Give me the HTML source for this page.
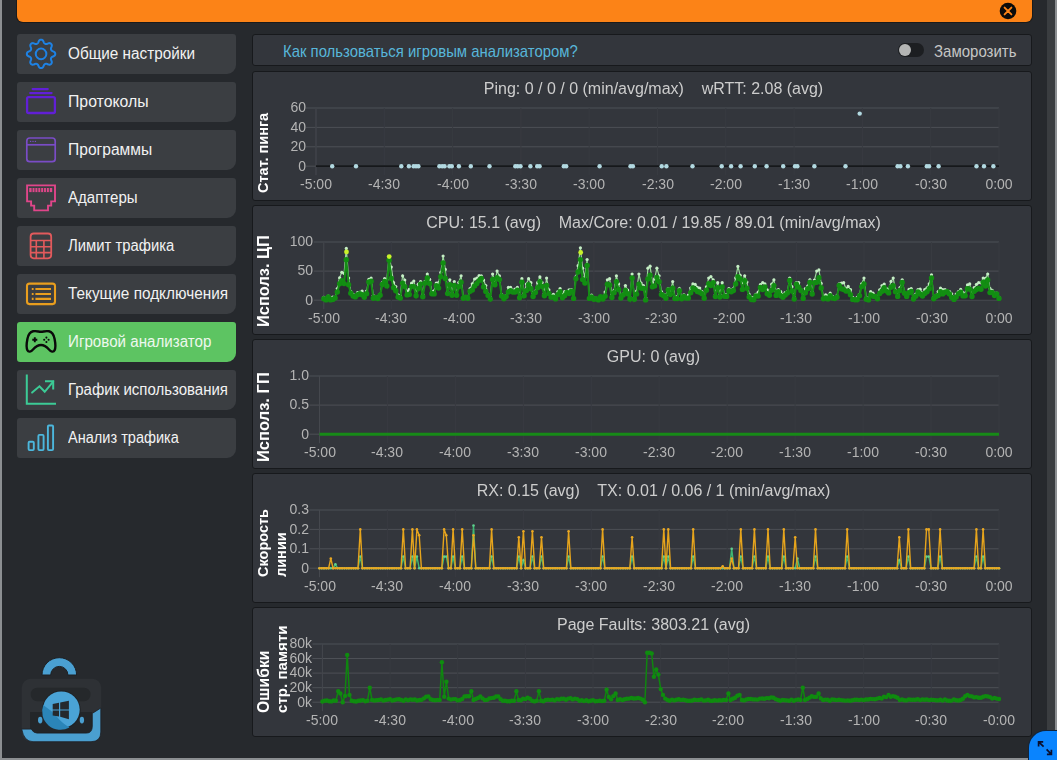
<!DOCTYPE html><html><head><meta charset="utf-8"><style>
*{margin:0;padding:0;box-sizing:border-box}
html,body{width:1057px;height:760px;overflow:hidden;background:#26292d;font-family:"Liberation Sans", sans-serif;}
.abs{position:absolute}
#lb{left:0;top:0;width:2px;height:760px;background:#8c8f92}
#bb{left:0;top:758px;width:1057px;height:2px;background:#8c8f92}
#rb{left:1055px;top:0;width:2px;height:760px;background:#8c8f92}
#sb{left:1047px;top:0;width:8px;height:758px;background:#3a3d40}
#banner{left:17px;top:-6px;width:1015px;height:28px;background:#fc8317;border-radius:6px;box-shadow:0 0 0 1px #1b1b1b}
.mi{position:absolute;left:17px;width:219px;height:40px;background:#3b3e42;border-radius:3px 3px 9px 3px;}
.mi.act{background:#5dc462}
.mt{position:absolute;left:68px;color:#f2f2f2;font-size:15px;white-space:pre;line-height:18px;transform-origin:0 14px}
.panel{position:absolute;left:252px;width:780px;background:#33363c;border:1px solid #17191c;border-radius:3px}
.ttl{position:absolute;font-size:16px;color:#cdcdcd;will-change:transform;white-space:pre;line-height:18px}
.yt{position:absolute;font-weight:bold;color:#ffffff;white-space:pre;transform-origin:0 0;transform:rotate(-90deg);line-height:17px}
.tl{position:absolute;font-size:14px;color:#b4b4b4;will-change:transform;white-space:pre;line-height:16px}
</style></head><body><div class="abs" id="banner"></div><svg class="abs" style="left:999px;top:2px" width="18" height="18" viewBox="0 0 18 18"><circle cx="9" cy="9" r="8.3" fill="#0b0b0b"/><path d="M5.6 5.6L12.4 12.4M12.4 5.6L5.6 12.4" stroke="#fc8317" stroke-width="1.9" stroke-linecap="round"/></svg><div class="mi" style="top:34px"></div><div class="mt" style="top:44.7px;transform:scale(1.0206,1.04)">Общие настройки</div><div class="mi" style="top:82px"></div><div class="mt" style="top:92.7px;transform:scale(1.0544,1.04)">Протоколы</div><div class="mi" style="top:130px"></div><div class="mt" style="top:140.7px;transform:scale(1.0395,1.04)">Программы</div><div class="mi" style="top:178px"></div><div class="mt" style="top:188.7px;transform:scale(1.0030,1.04)">Адаптеры</div><div class="mi" style="top:226px"></div><div class="mt" style="top:236.7px;transform:scale(0.9886,1.04)">Лимит трафика</div><div class="mi" style="top:274px"></div><div class="mt" style="top:284.7px;transform:scale(1.0235,1.04)">Текущие подключения</div><div class="mi act" style="top:322px"></div><div class="mt" style="top:332.7px;color:#eef8ee;transform:scale(1.0100,1.04)">Игровой анализатор</div><div class="mi" style="top:370px"></div><div class="mt" style="top:380.7px;transform:scale(1.0000,1.04)">График использования</div><div class="mi" style="top:418px"></div><div class="mt" style="top:428.7px;transform:scale(0.9698,1.04)">Анализ трафика</div><svg class="abs" style="left:0;top:0" width="240" height="470" viewBox="0 0 240 470" fill="none">
<g stroke="#1e82e4" stroke-width="2"><path d="M55.25 53.90L55.23 54.27L55.15 54.64L55.02 55.00L54.82 55.35L54.52 55.67L54.11 55.97L53.62 56.23L53.09 56.46L52.60 56.67L52.18 56.88L51.84 57.10L51.59 57.33L51.40 57.56L51.24 57.81L51.12 58.07L51.02 58.34L50.96 58.63L50.93 58.93L50.94 59.27L51.03 59.66L51.18 60.10L51.38 60.61L51.59 61.14L51.75 61.67L51.83 62.17L51.81 62.61L51.71 63.00L51.55 63.35L51.34 63.66L51.09 63.94L50.81 64.19L50.50 64.40L50.15 64.56L49.76 64.66L49.32 64.68L48.82 64.60L48.29 64.44L47.76 64.23L47.25 64.03L46.81 63.88L46.42 63.79L46.08 63.78L45.78 63.81L45.49 63.87L45.22 63.97L44.96 64.09L44.71 64.25L44.48 64.44L44.25 64.69L44.03 65.03L43.82 65.45L43.61 65.94L43.38 66.47L43.12 66.96L42.82 67.37L42.50 67.67L42.15 67.87L41.79 68.00L41.42 68.08L41.05 68.10L40.68 68.08L40.31 68.00L39.95 67.87L39.60 67.67L39.28 67.37L38.98 66.96L38.72 66.47L38.49 65.94L38.28 65.45L38.07 65.03L37.85 64.69L37.62 64.44L37.39 64.25L37.14 64.09L36.88 63.97L36.61 63.87L36.32 63.81L36.02 63.78L35.68 63.79L35.29 63.88L34.85 64.03L34.34 64.23L33.81 64.44L33.28 64.60L32.78 64.68L32.34 64.66L31.95 64.56L31.60 64.40L31.29 64.19L31.01 63.94L30.76 63.66L30.55 63.35L30.39 63.00L30.29 62.61L30.27 62.17L30.35 61.67L30.51 61.14L30.72 60.61L30.92 60.10L31.07 59.66L31.16 59.27L31.17 58.93L31.14 58.63L31.08 58.34L30.98 58.07L30.86 57.81L30.70 57.56L30.51 57.33L30.26 57.10L29.92 56.88L29.50 56.67L29.01 56.46L28.48 56.23L27.99 55.97L27.58 55.67L27.28 55.35L27.08 55.00L26.95 54.64L26.87 54.27L26.85 53.90L26.87 53.53L26.95 53.16L27.08 52.80L27.28 52.45L27.58 52.13L27.99 51.83L28.48 51.57L29.01 51.34L29.50 51.13L29.92 50.92L30.26 50.70L30.51 50.47L30.70 50.24L30.86 49.99L30.98 49.73L31.08 49.46L31.14 49.17L31.17 48.87L31.16 48.53L31.07 48.14L30.92 47.70L30.72 47.19L30.51 46.66L30.35 46.13L30.27 45.63L30.29 45.19L30.39 44.80L30.55 44.45L30.76 44.14L31.01 43.86L31.29 43.61L31.60 43.40L31.95 43.24L32.34 43.14L32.78 43.12L33.28 43.20L33.81 43.36L34.34 43.57L34.85 43.77L35.29 43.92L35.68 44.01L36.02 44.02L36.32 43.99L36.61 43.93L36.88 43.83L37.14 43.71L37.39 43.55L37.62 43.36L37.85 43.11L38.07 42.77L38.28 42.35L38.49 41.86L38.72 41.33L38.98 40.84L39.28 40.43L39.60 40.13L39.95 39.93L40.31 39.80L40.68 39.72L41.05 39.70L41.42 39.72L41.79 39.80L42.15 39.93L42.50 40.13L42.82 40.43L43.12 40.84L43.38 41.33L43.61 41.86L43.82 42.35L44.03 42.77L44.25 43.11L44.48 43.36L44.71 43.55L44.96 43.71L45.22 43.83L45.49 43.93L45.78 43.99L46.08 44.02L46.42 44.01L46.81 43.92L47.25 43.77L47.76 43.57L48.29 43.36L48.82 43.20L49.32 43.12L49.76 43.14L50.15 43.24L50.50 43.40L50.81 43.61L51.09 43.86L51.34 44.14L51.55 44.45L51.71 44.80L51.81 45.19L51.83 45.63L51.75 46.13L51.59 46.66L51.38 47.19L51.18 47.70L51.03 48.14L50.94 48.53L50.93 48.87L50.96 49.17L51.02 49.46L51.12 49.73L51.24 49.99L51.40 50.24L51.59 50.47L51.84 50.70L52.18 50.92L52.60 51.13L53.09 51.34L53.62 51.57L54.11 51.83L54.52 52.13L54.82 52.45L55.02 52.80L55.15 53.16L55.23 53.53Z"/><circle cx="41.05" cy="53.9" r="5.3"/></g>
<g stroke="#611fd6"><rect x="27.1" y="97.1" width="27.8" height="15.9" rx="1.5" stroke-width="2.3"/><path d="M32.6 89.1H47.8M30.2 93.1H51.6" stroke-width="2.1" stroke-linecap="round"/></g>
<g stroke="#7a4cc6" stroke-width="1.7"><rect x="26.8" y="138" width="28.4" height="23.7" rx="3"/><path d="M26.8 144.8H55.2"/><circle cx="30.6" cy="141.4" r="0.7" fill="#7a4cc6" stroke="none"/><circle cx="33" cy="141.4" r="0.7" fill="#7a4cc6" stroke="none"/><circle cx="35.4" cy="141.4" r="0.7" fill="#7a4cc6" stroke="none"/></g>
<g stroke="#e0468a" stroke-width="1.9"><path d="M27.1 185.4H55V201.4H51.2V205.6H48V210.4H34.2V205.6H31.1V201.4H27.1Z"/><rect x="29.2" y="188" width="23" height="4.1" fill="#e0468a" stroke="none"/><path d="M32.08 187.8V192.3M34.95 187.8V192.3M37.83 187.8V192.3M40.70 187.8V192.3M43.58 187.8V192.3M46.45 187.8V192.3M49.33 187.8V192.3" stroke="#3b3e42" stroke-width="0.9"/></g>
<g stroke="#e25a5c" stroke-width="1.8"><rect x="30.6" y="233.5" width="20.6" height="24.8" rx="3.2"/><path d="M30.6 240.5H51.2M30.6 246.8H51.2M30.6 252.6H51.2M36.3 240.5V258.3M43.9 240.5V258.3" stroke-width="1.6"/></g>
<g stroke="#e99e1e"><rect x="27" y="283.6" width="28" height="20.5" rx="2.5" stroke-width="2.1"/><path d="M35.4 289H51M35.4 294H51M35.4 298.9H51" stroke-width="2.1"/><path d="M31.8 289H33.6M31.8 294H33.6M31.8 298.9H33.6" stroke-width="2.1"/></g>
<g stroke="#0a0a0a" stroke-width="2.4"><path d="M33 331.3C36.5 330.6 38.5 331.8 41 331.8C43.5 331.8 45.5 330.6 49 331.3C52.5 332 53.8 335 54.6 339C55.4 343 55.6 348 54.6 350.2C53.5 352.5 51 351.8 49 349.5C46.8 347 44.5 345 41 345C37.5 345 35.2 347 33 349.5C31 351.8 28.5 352.5 27.4 350.2C26.4 348 26.6 343 27.4 339C28.2 335 29.5 332 33 331.3Z"/><path d="M34.8 337.3V342.3M32.3 339.8H37.3" stroke-width="1.9"/></g>
<g fill="#0a0a0a"><circle cx="44.2" cy="339.8" r="1.05"/><circle cx="46.4" cy="337.6" r="1.05"/><circle cx="46.4" cy="342" r="1.05"/><circle cx="48.6" cy="339.8" r="1.05"/></g>
<g stroke="#3ccb96" stroke-width="2"><path d="M26.8 374.6V403.7H56"/><path d="M32.1 392.6L39.5 386.3L44.7 391.8L53.2 381.6" stroke-linecap="round"/><path d="M45 381.3H53.2V389.5"/></g>
<g stroke="#4cb7dd" stroke-width="1.9"><rect x="28.6" y="441.7" width="5.2" height="8.4" rx="1"/><rect x="38.4" y="434.9" width="5.2" height="15.2" rx="1"/><rect x="47.9" y="425.5" width="5.2" height="24.6" rx="1"/></g>
</svg><svg class="abs" style="left:0;top:640px" width="120" height="110" viewBox="0 640 120 110">
<path d="M42 675A17.3 17.3 0 0 1 76.6 675H67.9A8.6 8.6 0 0 0 50.7 675Z" fill="#4aa0d2" stroke="#1d2024" stroke-width="1"/>
<rect x="21.7" y="678.8" width="79.6" height="62.9" rx="9" fill="#2e3135"/>
<rect x="30.7" y="687.7" width="59.8" height="13.5" rx="6.5" fill="#25282b"/>
<path d="M30 712H92V734H30Z" fill="#232629"/>
<path d="M21.7 729.1H31.2Q33.5 733.1 37 733.1H86.5Q92.3 733.1 92.3 726V713.4L100.8 708V732Q100.8 741.7 91 741.7H33Q24 741.7 21.7 729.1Z" fill="#4a9fd0" stroke="#1d2024" stroke-width="0.8"/>
<circle cx="61.3" cy="709.8" r="19.3" fill="#1d2024"/>
<circle cx="61.3" cy="709.8" r="18.4" fill="#4aa3d6"/>
<ellipse cx="40.2" cy="720.1" rx="2.2" ry="3.4" fill="#4a9fd0"/>
<ellipse cx="81.9" cy="720.1" rx="2.2" ry="3.4" fill="#4a9fd0"/>
<path d="M43.2 705Q51 710 57 717Q63 724 69.5 727.4A18.4 18.4 0 0 1 43.2 705Z" fill="#2b85b8"/>
<path d="M52.7 703.9L59 702.8V709.5H52.7ZM60.2 702.6L68.9 700.8V709.5H60.2ZM52.7 710.5H59V716.6L52.7 715.6ZM60.2 710.5H68.9V719.2L60.2 716.8Z" fill="#25292d"/>
</svg><div class="panel" style="top:34px;height:32px"></div><div class="abs" style="left:283px;top:42.5px;font-size:14.9px;color:#58b6da;white-space:pre;line-height:18px;transform:scaleY(1.06);transform-origin:0 14px">Как пользоваться игровым анализатором?</div><div class="abs" style="left:898px;top:42.8px;width:25.5px;height:14px;border-radius:7px;background:#1c1e21"></div><div class="abs" style="left:899px;top:43.9px;width:11.8px;height:11.8px;border-radius:50%;background:#b4b5b4"></div><div class="abs" style="left:934px;top:42.5px;font-size:15px;color:#c6c6c6;white-space:pre;line-height:18px;transform:scaleY(1.06);transform-origin:0 14px">Заморозить</div><div class="panel" style="top:71px;height:130px"></div><div class="ttl" style="left:275px;width:757px;text-align:center;top:80px">Ping: 0 / 0 / 0 (min/avg/max)    wRTT: 2.08 (avg)</div><svg class="abs" style="left:0;top:0" width="1057" height="760" viewBox="0 0 1057 760"><line x1="306" y1="108.0" x2="999" y2="108.0" stroke="#4d5056" stroke-width="1"/><line x1="306" y1="127.4" x2="999" y2="127.4" stroke="#4d5056" stroke-width="1"/><line x1="306" y1="146.8" x2="999" y2="146.8" stroke="#4d5056" stroke-width="1"/><line x1="306" y1="166.2" x2="999" y2="166.2" stroke="#4d5056" stroke-width="1"/><line x1="316.0" y1="108" x2="316.0" y2="175.2" stroke="#383b41" stroke-width="1"/><line x1="384.3" y1="108" x2="384.3" y2="175.2" stroke="#383b41" stroke-width="1"/><line x1="452.6" y1="108" x2="452.6" y2="175.2" stroke="#383b41" stroke-width="1"/><line x1="520.9" y1="108" x2="520.9" y2="175.2" stroke="#383b41" stroke-width="1"/><line x1="589.2" y1="108" x2="589.2" y2="175.2" stroke="#383b41" stroke-width="1"/><line x1="657.5" y1="108" x2="657.5" y2="175.2" stroke="#383b41" stroke-width="1"/><line x1="725.8" y1="108" x2="725.8" y2="175.2" stroke="#383b41" stroke-width="1"/><line x1="794.1" y1="108" x2="794.1" y2="175.2" stroke="#383b41" stroke-width="1"/><line x1="862.4" y1="108" x2="862.4" y2="175.2" stroke="#383b41" stroke-width="1"/><line x1="930.7" y1="108" x2="930.7" y2="175.2" stroke="#383b41" stroke-width="1"/><line x1="999.0" y1="108" x2="999.0" y2="175.2" stroke="#383b41" stroke-width="1"/><line x1="316" y1="108" x2="316" y2="175.2" stroke="#45484e" stroke-width="1"/><line x1="316" y1="166.2" x2="999" y2="166.2" stroke="#16181b" stroke-width="1.7"/><circle cx="332.2" cy="166.2" r="2.2" fill="#b2d9e1"/><circle cx="356" cy="166.2" r="2.2" fill="#b2d9e1"/><circle cx="401.3" cy="166.2" r="2.2" fill="#b2d9e1"/><circle cx="408.9" cy="166.2" r="2.2" fill="#b2d9e1"/><circle cx="413.6" cy="166.2" r="2.2" fill="#b2d9e1"/><circle cx="416" cy="166.2" r="2.2" fill="#b2d9e1"/><circle cx="418.4" cy="166.2" r="2.2" fill="#b2d9e1"/><circle cx="439.4" cy="166.2" r="2.2" fill="#b2d9e1"/><circle cx="442.2" cy="166.2" r="2.2" fill="#b2d9e1"/><circle cx="444.6" cy="166.2" r="2.2" fill="#b2d9e1"/><circle cx="449.4" cy="166.2" r="2.2" fill="#b2d9e1"/><circle cx="451.8" cy="166.2" r="2.2" fill="#b2d9e1"/><circle cx="458.9" cy="166.2" r="2.2" fill="#b2d9e1"/><circle cx="470.8" cy="166.2" r="2.2" fill="#b2d9e1"/><circle cx="489.5" cy="166.2" r="2.2" fill="#b2d9e1"/><circle cx="515.3" cy="166.2" r="2.2" fill="#b2d9e1"/><circle cx="517.7" cy="166.2" r="2.2" fill="#b2d9e1"/><circle cx="520.5" cy="166.2" r="2.2" fill="#b2d9e1"/><circle cx="530.4" cy="166.2" r="2.2" fill="#b2d9e1"/><circle cx="537.2" cy="166.2" r="2.2" fill="#b2d9e1"/><circle cx="539.6" cy="166.2" r="2.2" fill="#b2d9e1"/><circle cx="563.8" cy="166.2" r="2.2" fill="#b2d9e1"/><circle cx="566.2" cy="166.2" r="2.2" fill="#b2d9e1"/><circle cx="599.6" cy="166.2" r="2.2" fill="#b2d9e1"/><circle cx="630.5" cy="166.2" r="2.2" fill="#b2d9e1"/><circle cx="632.9" cy="166.2" r="2.2" fill="#b2d9e1"/><circle cx="661.7" cy="166.2" r="2.2" fill="#b2d9e1"/><circle cx="666.4" cy="166.2" r="2.2" fill="#b2d9e1"/><circle cx="692.5" cy="166.2" r="2.2" fill="#b2d9e1"/><circle cx="721.7" cy="166.2" r="2.2" fill="#b2d9e1"/><circle cx="731.1" cy="166.2" r="2.2" fill="#b2d9e1"/><circle cx="740.6" cy="166.2" r="2.2" fill="#b2d9e1"/><circle cx="754.8" cy="166.2" r="2.2" fill="#b2d9e1"/><circle cx="766.6" cy="166.2" r="2.2" fill="#b2d9e1"/><circle cx="783.2" cy="166.2" r="2.2" fill="#b2d9e1"/><circle cx="795" cy="166.2" r="2.2" fill="#b2d9e1"/><circle cx="797.4" cy="166.2" r="2.2" fill="#b2d9e1"/><circle cx="814.4" cy="166.2" r="2.2" fill="#b2d9e1"/><circle cx="845.5" cy="166.2" r="2.2" fill="#b2d9e1"/><circle cx="897.6" cy="166.2" r="2.2" fill="#b2d9e1"/><circle cx="900.4" cy="166.2" r="2.2" fill="#b2d9e1"/><circle cx="907.9" cy="166.2" r="2.2" fill="#b2d9e1"/><circle cx="926.8" cy="166.2" r="2.2" fill="#b2d9e1"/><circle cx="929.1" cy="166.2" r="2.2" fill="#b2d9e1"/><circle cx="938.6" cy="166.2" r="2.2" fill="#b2d9e1"/><circle cx="976.5" cy="166.2" r="2.2" fill="#b2d9e1"/><circle cx="984" cy="166.2" r="2.2" fill="#b2d9e1"/><circle cx="993.4" cy="166.2" r="2.2" fill="#b2d9e1"/><circle cx="859.7" cy="113.6" r="2.2" fill="#b2d9e1"/></svg><div class="tl" style="left:65.5px;width:240px;text-align:right;top:99.3px">60</div><div class="tl" style="left:65.5px;width:240px;text-align:right;top:118.7px">40</div><div class="tl" style="left:65.5px;width:240px;text-align:right;top:138.1px">20</div><div class="tl" style="left:65.5px;width:240px;text-align:right;top:157.5px">0</div><div class="tl" style="left:276.0px;width:80px;text-align:center;top:176.2px">-5:00</div><div class="tl" style="left:344.3px;width:80px;text-align:center;top:176.2px">-4:30</div><div class="tl" style="left:412.6px;width:80px;text-align:center;top:176.2px">-4:00</div><div class="tl" style="left:480.9px;width:80px;text-align:center;top:176.2px">-3:30</div><div class="tl" style="left:549.2px;width:80px;text-align:center;top:176.2px">-3:00</div><div class="tl" style="left:617.5px;width:80px;text-align:center;top:176.2px">-2:30</div><div class="tl" style="left:685.8px;width:80px;text-align:center;top:176.2px">-2:00</div><div class="tl" style="left:754.1px;width:80px;text-align:center;top:176.2px">-1:30</div><div class="tl" style="left:822.4px;width:80px;text-align:center;top:176.2px">-1:00</div><div class="tl" style="left:890.7px;width:80px;text-align:center;top:176.2px">-0:30</div><div class="tl" style="left:959.0px;width:80px;text-align:center;top:176.2px">0:00</div><div class="yt" style="left:255px;top:193px;font-size:14.5px">Стат. пинга</div><div class="panel" style="top:205px;height:130px"></div><div class="ttl" style="left:275px;width:757px;text-align:center;top:214px">CPU: 15.1 (avg)    Max/Core: 0.01 / 19.85 / 89.01 (min/avg/max)</div><svg class="abs" style="left:0;top:0" width="1057" height="760" viewBox="0 0 1057 760"><line x1="313.8" y1="242.0" x2="999" y2="242.0" stroke="#4d5056" stroke-width="1"/><line x1="313.8" y1="271.1" x2="999" y2="271.1" stroke="#4d5056" stroke-width="1"/><line x1="313.8" y1="300.2" x2="999" y2="300.2" stroke="#4d5056" stroke-width="1"/><line x1="323.8" y1="242" x2="323.8" y2="309.2" stroke="#383b41" stroke-width="1"/><line x1="391.3" y1="242" x2="391.3" y2="309.2" stroke="#383b41" stroke-width="1"/><line x1="458.8" y1="242" x2="458.8" y2="309.2" stroke="#383b41" stroke-width="1"/><line x1="526.4" y1="242" x2="526.4" y2="309.2" stroke="#383b41" stroke-width="1"/><line x1="593.9" y1="242" x2="593.9" y2="309.2" stroke="#383b41" stroke-width="1"/><line x1="661.4" y1="242" x2="661.4" y2="309.2" stroke="#383b41" stroke-width="1"/><line x1="728.9" y1="242" x2="728.9" y2="309.2" stroke="#383b41" stroke-width="1"/><line x1="796.4" y1="242" x2="796.4" y2="309.2" stroke="#383b41" stroke-width="1"/><line x1="864.0" y1="242" x2="864.0" y2="309.2" stroke="#383b41" stroke-width="1"/><line x1="931.5" y1="242" x2="931.5" y2="309.2" stroke="#383b41" stroke-width="1"/><line x1="999.0" y1="242" x2="999.0" y2="309.2" stroke="#383b41" stroke-width="1"/><line x1="323.8" y1="242" x2="323.8" y2="309.2" stroke="#45484e" stroke-width="1"/><path d="M323.8 298.8L326.1 299.9L328.3 296.9L330.6 299.9L332.8 299.4L335.1 297.9L337.3 292.0L339.6 283.7L341.8 280.6L344.1 283.6L346.3 259.7L348.6 284.7L350.8 293.3L353.1 296.1L355.3 296.9L357.6 294.7L359.8 293.7L362.1 294.7L364.3 297.3L366.6 293.8L368.8 282.0L371.1 281.3L373.3 298.3L375.6 297.5L377.8 298.5L380.1 295.2L382.3 284.5L384.6 281.4L386.8 285.9L389.1 260.2L391.3 278.4L393.6 287.8L395.8 290.8L398.1 297.1L400.3 298.1L402.6 283.1L404.8 286.6L407.1 294.9L409.3 294.4L411.6 286.6L413.8 286.6L416.1 295.7L418.3 288.6L420.6 284.1L422.8 296.7L425.1 283.0L427.3 277.9L429.6 283.5L431.8 293.7L434.1 293.9L436.3 285.7L438.6 288.1L440.8 276.6L443.1 263.0L445.3 278.4L447.6 293.6L449.8 284.7L452.1 295.3L454.3 285.5L456.6 295.3L458.8 286.8L461.1 282.3L463.3 298.2L465.6 297.3L467.8 298.2L470.1 291.3L472.3 289.9L474.6 285.9L476.8 283.6L479.1 280.6L481.3 278.5L483.6 286.9L485.8 291.4L488.1 295.4L490.3 299.1L492.6 279.5L494.9 284.8L497.1 277.6L499.4 279.6L501.6 296.0L503.9 298.7L506.1 296.6L508.4 292.0L510.6 290.7L512.9 292.0L515.1 292.0L517.4 290.1L519.6 297.8L521.9 282.2L524.1 295.7L526.4 290.6L528.6 284.7L530.9 288.7L533.1 296.5L535.4 292.6L537.6 287.7L539.9 281.6L542.1 286.5L544.4 295.8L546.6 285.4L548.9 293.5L551.1 297.3L553.4 297.1L555.6 298.9L557.9 294.7L560.1 291.8L562.4 297.8L564.6 295.7L566.9 292.5L569.1 293.5L571.4 291.1L573.6 298.4L575.9 278.8L578.1 272.0L580.4 259.6L582.6 279.6L584.9 283.1L587.1 265.5L589.4 298.4L591.6 296.9L593.9 299.3L596.1 298.8L598.4 299.9L600.6 296.7L602.9 299.1L605.1 296.2L607.4 284.2L609.6 285.0L611.9 297.5L614.1 292.7L616.4 281.7L618.6 289.5L620.9 298.1L623.1 294.9L625.4 290.5L627.6 293.7L629.9 299.0L632.1 277.9L634.4 299.2L636.6 294.1L638.9 284.1L641.1 288.0L643.4 288.4L645.6 299.9L647.9 279.0L650.1 275.1L652.4 286.7L654.6 285.9L656.9 277.5L659.1 281.7L661.4 294.5L663.7 295.7L665.9 298.2L668.2 289.9L670.4 294.5L672.7 288.2L674.9 298.6L677.2 298.6L679.4 290.8L681.7 298.7L683.9 296.5L686.2 298.1L688.4 298.1L690.7 292.7L692.9 288.0L695.2 289.4L697.4 291.6L699.7 292.3L701.9 293.8L704.2 298.3L706.4 290.3L708.7 283.7L710.9 285.5L713.2 282.7L715.4 296.6L717.7 287.7L719.9 297.1L722.2 286.9L724.4 296.3L726.7 296.4L728.9 290.8L731.2 291.7L733.4 290.5L735.7 283.9L737.9 276.8L740.2 279.0L742.4 289.4L744.7 280.7L746.9 288.3L749.2 296.9L751.4 299.6L753.7 299.7L755.9 296.0L758.2 296.1L760.4 287.4L762.7 289.6L764.9 287.0L767.2 293.8L769.4 295.2L771.7 290.2L773.9 285.6L776.2 295.4L778.4 291.7L780.7 295.8L782.9 297.3L785.2 295.1L787.4 293.0L789.7 280.4L791.9 291.0L794.2 299.1L796.4 284.1L798.7 287.2L800.9 290.4L803.2 298.4L805.4 292.8L807.7 288.7L809.9 282.5L812.2 294.0L814.4 282.8L816.7 282.2L818.9 277.7L821.2 287.9L823.4 298.8L825.7 297.9L827.9 298.9L830.2 295.8L832.5 298.1L834.7 298.5L837.0 297.2L839.2 285.4L841.5 288.8L843.7 289.4L846.0 291.1L848.2 291.1L850.5 294.8L852.7 299.4L855.0 299.7L857.2 299.7L859.5 295.7L861.7 286.6L864.0 284.0L866.2 299.2L868.5 299.9L870.7 295.0L873.0 296.3L875.2 296.5L877.5 298.8L879.7 293.5L882.0 291.3L884.2 287.6L886.5 291.1L888.7 292.9L891.0 287.3L893.2 285.6L895.5 291.7L897.7 296.4L900.0 290.5L902.2 282.5L904.5 293.3L906.7 296.4L909.0 292.8L911.2 291.5L913.5 299.0L915.7 296.3L918.0 291.9L920.2 294.1L922.5 296.0L924.7 293.4L927.0 291.8L929.2 288.7L931.5 278.0L933.7 298.7L936.0 296.4L938.2 295.4L940.5 291.7L942.7 293.9L945.0 292.3L947.2 291.8L949.5 294.0L951.7 297.4L954.0 299.4L956.2 297.0L958.5 293.8L960.7 292.3L963.0 295.9L965.2 295.7L967.5 288.8L969.7 289.1L972.0 296.5L974.2 291.3L976.5 289.5L978.7 288.4L981.0 289.2L983.2 282.3L985.5 286.0L987.7 280.0L990.0 292.6L992.2 292.4L994.5 295.6L996.7 294.0L999.0 298.4L999 300.2L323.8 300.2Z" fill="#000" fill-opacity="0.18"/><path d="M323.8 297.3L326.1 299.7L328.3 296.2L330.6 299.9L332.8 297.0L335.1 297.3L337.3 288.6L339.6 277.8L341.8 272.3L344.1 273.4L346.3 248.4L348.6 278.1L350.8 291.5L353.1 294.4L355.3 296.5L357.6 292.6L359.8 292.3L362.1 291.1L364.3 295.5L366.6 291.0L368.8 279.4L371.1 278.1L373.3 295.5L375.6 296.6L377.8 297.2L380.1 294.4L382.3 282.7L384.6 278.6L386.8 279.8L389.1 256.6L391.3 267.1L393.6 282.7L395.8 286.6L398.1 295.1L400.3 295.5L402.6 275.8L404.8 280.1L407.1 291.5L409.3 289.4L411.6 283.2L413.8 281.0L416.1 291.5L418.3 284.2L420.6 281.6L422.8 294.4L425.1 281.3L427.3 274.0L429.6 279.4L431.8 291.5L434.1 290.9L436.3 283.0L438.6 282.7L440.8 272.4L443.1 256.0L445.3 269.4L447.6 291.5L449.8 279.8L452.1 293.2L454.3 281.6L456.6 294.4L458.8 282.5L461.1 275.8L463.3 297.3L465.6 296.6L467.8 297.3L470.1 288.6L472.3 283.8L474.6 279.0L476.8 278.1L479.1 275.6L481.3 275.8L483.6 280.1L485.8 285.6L488.1 294.4L490.3 297.3L492.6 274.0L494.9 282.7L497.1 271.1L499.4 275.8L501.6 294.4L503.9 297.3L506.1 295.5L508.4 287.4L510.6 287.4L512.9 290.0L515.1 289.2L517.4 287.4L519.6 294.4L521.9 278.7L524.1 293.2L526.4 284.0L528.6 278.7L530.9 282.7L533.1 293.2L535.4 291.2L537.6 282.7L539.9 276.9L542.1 282.5L544.4 293.2L546.6 278.1L548.9 289.8L551.1 295.5L553.4 294.4L555.6 297.3L557.9 291.5L560.1 288.6L562.4 294.4L564.6 291.5L566.9 291.9L569.1 289.8L571.4 289.7L573.6 297.3L575.9 276.9L578.1 265.7L580.4 247.8L582.6 268.2L584.9 276.9L587.1 259.5L589.4 297.3L591.6 295.2L593.9 298.0L596.1 298.0L598.4 299.9L600.6 296.4L602.9 297.3L605.1 292.1L607.4 279.8L609.6 278.7L611.9 294.4L614.1 290.3L616.4 275.8L618.6 283.9L620.9 297.3L623.1 294.1L625.4 285.6L627.6 290.1L629.9 297.3L632.1 274.0L634.4 297.3L636.6 291.1L638.9 274.0L641.1 283.0L643.4 285.6L645.6 297.3L647.9 268.2L650.1 266.2L652.4 282.7L654.6 278.9L656.9 268.2L659.1 275.8L661.4 291.5L663.7 294.4L665.9 295.2L668.2 288.6L670.4 291.5L672.7 281.6L674.9 297.3L677.2 296.6L679.4 288.6L681.7 297.3L683.9 294.8L686.2 297.3L688.4 295.0L690.7 288.0L692.9 283.9L695.2 284.4L697.4 287.4L699.7 288.0L701.9 291.5L704.2 297.3L706.4 286.9L708.7 278.1L710.9 276.6L713.2 279.8L715.4 294.4L717.7 282.7L719.9 294.4L722.2 282.7L724.4 294.4L726.7 294.9L728.9 288.6L731.2 290.1L733.4 288.6L735.7 277.9L737.9 266.4L740.2 275.3L742.4 282.7L744.7 275.8L746.9 282.1L749.2 294.4L751.4 297.3L753.7 297.8L755.9 294.4L758.2 292.2L760.4 284.7L762.7 282.7L764.9 283.9L767.2 289.8L769.4 294.4L771.7 284.2L773.9 279.8L776.2 291.5L778.4 289.5L780.7 291.7L782.9 294.4L785.2 292.5L787.4 291.5L789.7 278.1L791.9 286.7L794.2 297.3L796.4 282.7L798.7 282.7L800.9 289.5L803.2 297.3L805.4 288.5L807.7 286.2L809.9 279.8L812.2 291.5L814.4 280.1L816.7 271.1L818.9 269.9L821.2 283.4L823.4 297.3L825.7 294.9L827.9 295.9L830.2 293.2L832.5 296.3L834.7 297.9L837.0 295.5L839.2 283.9L841.5 283.2L843.7 282.7L846.0 288.6L848.2 286.4L850.5 289.7L852.7 297.3L855.0 299.0L857.2 297.3L859.5 294.3L861.7 283.8L864.0 278.1L866.2 297.3L868.5 298.8L870.7 291.7L873.0 293.2L875.2 295.6L877.5 297.3L879.7 289.8L882.0 285.6L884.2 284.1L886.5 288.7L888.7 289.7L891.0 281.4L893.2 278.1L895.5 290.0L897.7 294.4L900.0 287.6L902.2 279.8L904.5 292.4L906.7 294.4L909.0 289.4L911.2 288.6L913.5 297.3L915.7 294.1L918.0 289.7L920.2 289.2L922.5 293.2L924.7 289.6L927.0 287.8L929.2 283.9L931.5 274.8L933.7 297.3L936.0 295.3L938.2 291.6L940.5 288.1L942.7 289.7L945.0 289.7L947.2 291.0L949.5 291.5L951.7 293.8L954.0 297.3L956.2 294.0L958.5 291.5L960.7 289.4L963.0 292.3L965.2 294.4L967.5 284.9L969.7 283.9L972.0 294.4L974.2 287.7L976.5 284.3L978.7 282.7L981.0 282.8L983.2 278.1L985.5 278.3L987.7 274.0L990.0 288.6L992.2 290.3L994.5 293.2L996.7 293.0L999.0 297.3" fill="none" stroke="#9ad89a" stroke-width="1.2"/><g fill="#c5eec5"><circle cx="323.8" cy="297.3" r="1.6"/><circle cx="326.1" cy="299.7" r="1.6"/><circle cx="328.3" cy="296.2" r="1.6"/><circle cx="330.6" cy="299.9" r="1.6"/><circle cx="332.8" cy="297.0" r="1.6"/><circle cx="335.1" cy="297.3" r="1.6"/><circle cx="337.3" cy="288.6" r="1.6"/><circle cx="339.6" cy="277.8" r="1.6"/><circle cx="341.8" cy="272.3" r="1.6"/><circle cx="344.1" cy="273.4" r="1.6"/><circle cx="346.3" cy="248.4" r="1.6"/><circle cx="348.6" cy="278.1" r="1.6"/><circle cx="350.8" cy="291.5" r="1.6"/><circle cx="353.1" cy="294.4" r="1.6"/><circle cx="355.3" cy="296.5" r="1.6"/><circle cx="357.6" cy="292.6" r="1.6"/><circle cx="359.8" cy="292.3" r="1.6"/><circle cx="362.1" cy="291.1" r="1.6"/><circle cx="364.3" cy="295.5" r="1.6"/><circle cx="366.6" cy="291.0" r="1.6"/><circle cx="368.8" cy="279.4" r="1.6"/><circle cx="371.1" cy="278.1" r="1.6"/><circle cx="373.3" cy="295.5" r="1.6"/><circle cx="375.6" cy="296.6" r="1.6"/><circle cx="377.8" cy="297.2" r="1.6"/><circle cx="380.1" cy="294.4" r="1.6"/><circle cx="382.3" cy="282.7" r="1.6"/><circle cx="384.6" cy="278.6" r="1.6"/><circle cx="386.8" cy="279.8" r="1.6"/><circle cx="389.1" cy="256.6" r="1.6"/><circle cx="391.3" cy="267.1" r="1.6"/><circle cx="393.6" cy="282.7" r="1.6"/><circle cx="395.8" cy="286.6" r="1.6"/><circle cx="398.1" cy="295.1" r="1.6"/><circle cx="400.3" cy="295.5" r="1.6"/><circle cx="402.6" cy="275.8" r="1.6"/><circle cx="404.8" cy="280.1" r="1.6"/><circle cx="407.1" cy="291.5" r="1.6"/><circle cx="409.3" cy="289.4" r="1.6"/><circle cx="411.6" cy="283.2" r="1.6"/><circle cx="413.8" cy="281.0" r="1.6"/><circle cx="416.1" cy="291.5" r="1.6"/><circle cx="418.3" cy="284.2" r="1.6"/><circle cx="420.6" cy="281.6" r="1.6"/><circle cx="422.8" cy="294.4" r="1.6"/><circle cx="425.1" cy="281.3" r="1.6"/><circle cx="427.3" cy="274.0" r="1.6"/><circle cx="429.6" cy="279.4" r="1.6"/><circle cx="431.8" cy="291.5" r="1.6"/><circle cx="434.1" cy="290.9" r="1.6"/><circle cx="436.3" cy="283.0" r="1.6"/><circle cx="438.6" cy="282.7" r="1.6"/><circle cx="440.8" cy="272.4" r="1.6"/><circle cx="443.1" cy="256.0" r="1.6"/><circle cx="445.3" cy="269.4" r="1.6"/><circle cx="447.6" cy="291.5" r="1.6"/><circle cx="449.8" cy="279.8" r="1.6"/><circle cx="452.1" cy="293.2" r="1.6"/><circle cx="454.3" cy="281.6" r="1.6"/><circle cx="456.6" cy="294.4" r="1.6"/><circle cx="458.8" cy="282.5" r="1.6"/><circle cx="461.1" cy="275.8" r="1.6"/><circle cx="463.3" cy="297.3" r="1.6"/><circle cx="465.6" cy="296.6" r="1.6"/><circle cx="467.8" cy="297.3" r="1.6"/><circle cx="470.1" cy="288.6" r="1.6"/><circle cx="472.3" cy="283.8" r="1.6"/><circle cx="474.6" cy="279.0" r="1.6"/><circle cx="476.8" cy="278.1" r="1.6"/><circle cx="479.1" cy="275.6" r="1.6"/><circle cx="481.3" cy="275.8" r="1.6"/><circle cx="483.6" cy="280.1" r="1.6"/><circle cx="485.8" cy="285.6" r="1.6"/><circle cx="488.1" cy="294.4" r="1.6"/><circle cx="490.3" cy="297.3" r="1.6"/><circle cx="492.6" cy="274.0" r="1.6"/><circle cx="494.9" cy="282.7" r="1.6"/><circle cx="497.1" cy="271.1" r="1.6"/><circle cx="499.4" cy="275.8" r="1.6"/><circle cx="501.6" cy="294.4" r="1.6"/><circle cx="503.9" cy="297.3" r="1.6"/><circle cx="506.1" cy="295.5" r="1.6"/><circle cx="508.4" cy="287.4" r="1.6"/><circle cx="510.6" cy="287.4" r="1.6"/><circle cx="512.9" cy="290.0" r="1.6"/><circle cx="515.1" cy="289.2" r="1.6"/><circle cx="517.4" cy="287.4" r="1.6"/><circle cx="519.6" cy="294.4" r="1.6"/><circle cx="521.9" cy="278.7" r="1.6"/><circle cx="524.1" cy="293.2" r="1.6"/><circle cx="526.4" cy="284.0" r="1.6"/><circle cx="528.6" cy="278.7" r="1.6"/><circle cx="530.9" cy="282.7" r="1.6"/><circle cx="533.1" cy="293.2" r="1.6"/><circle cx="535.4" cy="291.2" r="1.6"/><circle cx="537.6" cy="282.7" r="1.6"/><circle cx="539.9" cy="276.9" r="1.6"/><circle cx="542.1" cy="282.5" r="1.6"/><circle cx="544.4" cy="293.2" r="1.6"/><circle cx="546.6" cy="278.1" r="1.6"/><circle cx="548.9" cy="289.8" r="1.6"/><circle cx="551.1" cy="295.5" r="1.6"/><circle cx="553.4" cy="294.4" r="1.6"/><circle cx="555.6" cy="297.3" r="1.6"/><circle cx="557.9" cy="291.5" r="1.6"/><circle cx="560.1" cy="288.6" r="1.6"/><circle cx="562.4" cy="294.4" r="1.6"/><circle cx="564.6" cy="291.5" r="1.6"/><circle cx="566.9" cy="291.9" r="1.6"/><circle cx="569.1" cy="289.8" r="1.6"/><circle cx="571.4" cy="289.7" r="1.6"/><circle cx="573.6" cy="297.3" r="1.6"/><circle cx="575.9" cy="276.9" r="1.6"/><circle cx="578.1" cy="265.7" r="1.6"/><circle cx="580.4" cy="247.8" r="1.6"/><circle cx="582.6" cy="268.2" r="1.6"/><circle cx="584.9" cy="276.9" r="1.6"/><circle cx="587.1" cy="259.5" r="1.6"/><circle cx="589.4" cy="297.3" r="1.6"/><circle cx="591.6" cy="295.2" r="1.6"/><circle cx="593.9" cy="298.0" r="1.6"/><circle cx="596.1" cy="298.0" r="1.6"/><circle cx="598.4" cy="299.9" r="1.6"/><circle cx="600.6" cy="296.4" r="1.6"/><circle cx="602.9" cy="297.3" r="1.6"/><circle cx="605.1" cy="292.1" r="1.6"/><circle cx="607.4" cy="279.8" r="1.6"/><circle cx="609.6" cy="278.7" r="1.6"/><circle cx="611.9" cy="294.4" r="1.6"/><circle cx="614.1" cy="290.3" r="1.6"/><circle cx="616.4" cy="275.8" r="1.6"/><circle cx="618.6" cy="283.9" r="1.6"/><circle cx="620.9" cy="297.3" r="1.6"/><circle cx="623.1" cy="294.1" r="1.6"/><circle cx="625.4" cy="285.6" r="1.6"/><circle cx="627.6" cy="290.1" r="1.6"/><circle cx="629.9" cy="297.3" r="1.6"/><circle cx="632.1" cy="274.0" r="1.6"/><circle cx="634.4" cy="297.3" r="1.6"/><circle cx="636.6" cy="291.1" r="1.6"/><circle cx="638.9" cy="274.0" r="1.6"/><circle cx="641.1" cy="283.0" r="1.6"/><circle cx="643.4" cy="285.6" r="1.6"/><circle cx="645.6" cy="297.3" r="1.6"/><circle cx="647.9" cy="268.2" r="1.6"/><circle cx="650.1" cy="266.2" r="1.6"/><circle cx="652.4" cy="282.7" r="1.6"/><circle cx="654.6" cy="278.9" r="1.6"/><circle cx="656.9" cy="268.2" r="1.6"/><circle cx="659.1" cy="275.8" r="1.6"/><circle cx="661.4" cy="291.5" r="1.6"/><circle cx="663.7" cy="294.4" r="1.6"/><circle cx="665.9" cy="295.2" r="1.6"/><circle cx="668.2" cy="288.6" r="1.6"/><circle cx="670.4" cy="291.5" r="1.6"/><circle cx="672.7" cy="281.6" r="1.6"/><circle cx="674.9" cy="297.3" r="1.6"/><circle cx="677.2" cy="296.6" r="1.6"/><circle cx="679.4" cy="288.6" r="1.6"/><circle cx="681.7" cy="297.3" r="1.6"/><circle cx="683.9" cy="294.8" r="1.6"/><circle cx="686.2" cy="297.3" r="1.6"/><circle cx="688.4" cy="295.0" r="1.6"/><circle cx="690.7" cy="288.0" r="1.6"/><circle cx="692.9" cy="283.9" r="1.6"/><circle cx="695.2" cy="284.4" r="1.6"/><circle cx="697.4" cy="287.4" r="1.6"/><circle cx="699.7" cy="288.0" r="1.6"/><circle cx="701.9" cy="291.5" r="1.6"/><circle cx="704.2" cy="297.3" r="1.6"/><circle cx="706.4" cy="286.9" r="1.6"/><circle cx="708.7" cy="278.1" r="1.6"/><circle cx="710.9" cy="276.6" r="1.6"/><circle cx="713.2" cy="279.8" r="1.6"/><circle cx="715.4" cy="294.4" r="1.6"/><circle cx="717.7" cy="282.7" r="1.6"/><circle cx="719.9" cy="294.4" r="1.6"/><circle cx="722.2" cy="282.7" r="1.6"/><circle cx="724.4" cy="294.4" r="1.6"/><circle cx="726.7" cy="294.9" r="1.6"/><circle cx="728.9" cy="288.6" r="1.6"/><circle cx="731.2" cy="290.1" r="1.6"/><circle cx="733.4" cy="288.6" r="1.6"/><circle cx="735.7" cy="277.9" r="1.6"/><circle cx="737.9" cy="266.4" r="1.6"/><circle cx="740.2" cy="275.3" r="1.6"/><circle cx="742.4" cy="282.7" r="1.6"/><circle cx="744.7" cy="275.8" r="1.6"/><circle cx="746.9" cy="282.1" r="1.6"/><circle cx="749.2" cy="294.4" r="1.6"/><circle cx="751.4" cy="297.3" r="1.6"/><circle cx="753.7" cy="297.8" r="1.6"/><circle cx="755.9" cy="294.4" r="1.6"/><circle cx="758.2" cy="292.2" r="1.6"/><circle cx="760.4" cy="284.7" r="1.6"/><circle cx="762.7" cy="282.7" r="1.6"/><circle cx="764.9" cy="283.9" r="1.6"/><circle cx="767.2" cy="289.8" r="1.6"/><circle cx="769.4" cy="294.4" r="1.6"/><circle cx="771.7" cy="284.2" r="1.6"/><circle cx="773.9" cy="279.8" r="1.6"/><circle cx="776.2" cy="291.5" r="1.6"/><circle cx="778.4" cy="289.5" r="1.6"/><circle cx="780.7" cy="291.7" r="1.6"/><circle cx="782.9" cy="294.4" r="1.6"/><circle cx="785.2" cy="292.5" r="1.6"/><circle cx="787.4" cy="291.5" r="1.6"/><circle cx="789.7" cy="278.1" r="1.6"/><circle cx="791.9" cy="286.7" r="1.6"/><circle cx="794.2" cy="297.3" r="1.6"/><circle cx="796.4" cy="282.7" r="1.6"/><circle cx="798.7" cy="282.7" r="1.6"/><circle cx="800.9" cy="289.5" r="1.6"/><circle cx="803.2" cy="297.3" r="1.6"/><circle cx="805.4" cy="288.5" r="1.6"/><circle cx="807.7" cy="286.2" r="1.6"/><circle cx="809.9" cy="279.8" r="1.6"/><circle cx="812.2" cy="291.5" r="1.6"/><circle cx="814.4" cy="280.1" r="1.6"/><circle cx="816.7" cy="271.1" r="1.6"/><circle cx="818.9" cy="269.9" r="1.6"/><circle cx="821.2" cy="283.4" r="1.6"/><circle cx="823.4" cy="297.3" r="1.6"/><circle cx="825.7" cy="294.9" r="1.6"/><circle cx="827.9" cy="295.9" r="1.6"/><circle cx="830.2" cy="293.2" r="1.6"/><circle cx="832.5" cy="296.3" r="1.6"/><circle cx="834.7" cy="297.9" r="1.6"/><circle cx="837.0" cy="295.5" r="1.6"/><circle cx="839.2" cy="283.9" r="1.6"/><circle cx="841.5" cy="283.2" r="1.6"/><circle cx="843.7" cy="282.7" r="1.6"/><circle cx="846.0" cy="288.6" r="1.6"/><circle cx="848.2" cy="286.4" r="1.6"/><circle cx="850.5" cy="289.7" r="1.6"/><circle cx="852.7" cy="297.3" r="1.6"/><circle cx="855.0" cy="299.0" r="1.6"/><circle cx="857.2" cy="297.3" r="1.6"/><circle cx="859.5" cy="294.3" r="1.6"/><circle cx="861.7" cy="283.8" r="1.6"/><circle cx="864.0" cy="278.1" r="1.6"/><circle cx="866.2" cy="297.3" r="1.6"/><circle cx="868.5" cy="298.8" r="1.6"/><circle cx="870.7" cy="291.7" r="1.6"/><circle cx="873.0" cy="293.2" r="1.6"/><circle cx="875.2" cy="295.6" r="1.6"/><circle cx="877.5" cy="297.3" r="1.6"/><circle cx="879.7" cy="289.8" r="1.6"/><circle cx="882.0" cy="285.6" r="1.6"/><circle cx="884.2" cy="284.1" r="1.6"/><circle cx="886.5" cy="288.7" r="1.6"/><circle cx="888.7" cy="289.7" r="1.6"/><circle cx="891.0" cy="281.4" r="1.6"/><circle cx="893.2" cy="278.1" r="1.6"/><circle cx="895.5" cy="290.0" r="1.6"/><circle cx="897.7" cy="294.4" r="1.6"/><circle cx="900.0" cy="287.6" r="1.6"/><circle cx="902.2" cy="279.8" r="1.6"/><circle cx="904.5" cy="292.4" r="1.6"/><circle cx="906.7" cy="294.4" r="1.6"/><circle cx="909.0" cy="289.4" r="1.6"/><circle cx="911.2" cy="288.6" r="1.6"/><circle cx="913.5" cy="297.3" r="1.6"/><circle cx="915.7" cy="294.1" r="1.6"/><circle cx="918.0" cy="289.7" r="1.6"/><circle cx="920.2" cy="289.2" r="1.6"/><circle cx="922.5" cy="293.2" r="1.6"/><circle cx="924.7" cy="289.6" r="1.6"/><circle cx="927.0" cy="287.8" r="1.6"/><circle cx="929.2" cy="283.9" r="1.6"/><circle cx="931.5" cy="274.8" r="1.6"/><circle cx="933.7" cy="297.3" r="1.6"/><circle cx="936.0" cy="295.3" r="1.6"/><circle cx="938.2" cy="291.6" r="1.6"/><circle cx="940.5" cy="288.1" r="1.6"/><circle cx="942.7" cy="289.7" r="1.6"/><circle cx="945.0" cy="289.7" r="1.6"/><circle cx="947.2" cy="291.0" r="1.6"/><circle cx="949.5" cy="291.5" r="1.6"/><circle cx="951.7" cy="293.8" r="1.6"/><circle cx="954.0" cy="297.3" r="1.6"/><circle cx="956.2" cy="294.0" r="1.6"/><circle cx="958.5" cy="291.5" r="1.6"/><circle cx="960.7" cy="289.4" r="1.6"/><circle cx="963.0" cy="292.3" r="1.6"/><circle cx="965.2" cy="294.4" r="1.6"/><circle cx="967.5" cy="284.9" r="1.6"/><circle cx="969.7" cy="283.9" r="1.6"/><circle cx="972.0" cy="294.4" r="1.6"/><circle cx="974.2" cy="287.7" r="1.6"/><circle cx="976.5" cy="284.3" r="1.6"/><circle cx="978.7" cy="282.7" r="1.6"/><circle cx="981.0" cy="282.8" r="1.6"/><circle cx="983.2" cy="278.1" r="1.6"/><circle cx="985.5" cy="278.3" r="1.6"/><circle cx="987.7" cy="274.0" r="1.6"/><circle cx="990.0" cy="288.6" r="1.6"/><circle cx="992.2" cy="290.3" r="1.6"/><circle cx="994.5" cy="293.2" r="1.6"/><circle cx="996.7" cy="293.0" r="1.6"/><circle cx="999.0" cy="297.3" r="1.6"/></g><path d="M323.8 298.8L326.1 299.9L328.3 296.9L330.6 299.9L332.8 299.4L335.1 297.9L337.3 292.0L339.6 283.7L341.8 280.6L344.1 283.6L346.3 259.7L348.6 284.7L350.8 293.3L353.1 296.1L355.3 296.9L357.6 294.7L359.8 293.7L362.1 294.7L364.3 297.3L366.6 293.8L368.8 282.0L371.1 281.3L373.3 298.3L375.6 297.5L377.8 298.5L380.1 295.2L382.3 284.5L384.6 281.4L386.8 285.9L389.1 260.2L391.3 278.4L393.6 287.8L395.8 290.8L398.1 297.1L400.3 298.1L402.6 283.1L404.8 286.6L407.1 294.9L409.3 294.4L411.6 286.6L413.8 286.6L416.1 295.7L418.3 288.6L420.6 284.1L422.8 296.7L425.1 283.0L427.3 277.9L429.6 283.5L431.8 293.7L434.1 293.9L436.3 285.7L438.6 288.1L440.8 276.6L443.1 263.0L445.3 278.4L447.6 293.6L449.8 284.7L452.1 295.3L454.3 285.5L456.6 295.3L458.8 286.8L461.1 282.3L463.3 298.2L465.6 297.3L467.8 298.2L470.1 291.3L472.3 289.9L474.6 285.9L476.8 283.6L479.1 280.6L481.3 278.5L483.6 286.9L485.8 291.4L488.1 295.4L490.3 299.1L492.6 279.5L494.9 284.8L497.1 277.6L499.4 279.6L501.6 296.0L503.9 298.7L506.1 296.6L508.4 292.0L510.6 290.7L512.9 292.0L515.1 292.0L517.4 290.1L519.6 297.8L521.9 282.2L524.1 295.7L526.4 290.6L528.6 284.7L530.9 288.7L533.1 296.5L535.4 292.6L537.6 287.7L539.9 281.6L542.1 286.5L544.4 295.8L546.6 285.4L548.9 293.5L551.1 297.3L553.4 297.1L555.6 298.9L557.9 294.7L560.1 291.8L562.4 297.8L564.6 295.7L566.9 292.5L569.1 293.5L571.4 291.1L573.6 298.4L575.9 278.8L578.1 272.0L580.4 259.6L582.6 279.6L584.9 283.1L587.1 265.5L589.4 298.4L591.6 296.9L593.9 299.3L596.1 298.8L598.4 299.9L600.6 296.7L602.9 299.1L605.1 296.2L607.4 284.2L609.6 285.0L611.9 297.5L614.1 292.7L616.4 281.7L618.6 289.5L620.9 298.1L623.1 294.9L625.4 290.5L627.6 293.7L629.9 299.0L632.1 277.9L634.4 299.2L636.6 294.1L638.9 284.1L641.1 288.0L643.4 288.4L645.6 299.9L647.9 279.0L650.1 275.1L652.4 286.7L654.6 285.9L656.9 277.5L659.1 281.7L661.4 294.5L663.7 295.7L665.9 298.2L668.2 289.9L670.4 294.5L672.7 288.2L674.9 298.6L677.2 298.6L679.4 290.8L681.7 298.7L683.9 296.5L686.2 298.1L688.4 298.1L690.7 292.7L692.9 288.0L695.2 289.4L697.4 291.6L699.7 292.3L701.9 293.8L704.2 298.3L706.4 290.3L708.7 283.7L710.9 285.5L713.2 282.7L715.4 296.6L717.7 287.7L719.9 297.1L722.2 286.9L724.4 296.3L726.7 296.4L728.9 290.8L731.2 291.7L733.4 290.5L735.7 283.9L737.9 276.8L740.2 279.0L742.4 289.4L744.7 280.7L746.9 288.3L749.2 296.9L751.4 299.6L753.7 299.7L755.9 296.0L758.2 296.1L760.4 287.4L762.7 289.6L764.9 287.0L767.2 293.8L769.4 295.2L771.7 290.2L773.9 285.6L776.2 295.4L778.4 291.7L780.7 295.8L782.9 297.3L785.2 295.1L787.4 293.0L789.7 280.4L791.9 291.0L794.2 299.1L796.4 284.1L798.7 287.2L800.9 290.4L803.2 298.4L805.4 292.8L807.7 288.7L809.9 282.5L812.2 294.0L814.4 282.8L816.7 282.2L818.9 277.7L821.2 287.9L823.4 298.8L825.7 297.9L827.9 298.9L830.2 295.8L832.5 298.1L834.7 298.5L837.0 297.2L839.2 285.4L841.5 288.8L843.7 289.4L846.0 291.1L848.2 291.1L850.5 294.8L852.7 299.4L855.0 299.7L857.2 299.7L859.5 295.7L861.7 286.6L864.0 284.0L866.2 299.2L868.5 299.9L870.7 295.0L873.0 296.3L875.2 296.5L877.5 298.8L879.7 293.5L882.0 291.3L884.2 287.6L886.5 291.1L888.7 292.9L891.0 287.3L893.2 285.6L895.5 291.7L897.7 296.4L900.0 290.5L902.2 282.5L904.5 293.3L906.7 296.4L909.0 292.8L911.2 291.5L913.5 299.0L915.7 296.3L918.0 291.9L920.2 294.1L922.5 296.0L924.7 293.4L927.0 291.8L929.2 288.7L931.5 278.0L933.7 298.7L936.0 296.4L938.2 295.4L940.5 291.7L942.7 293.9L945.0 292.3L947.2 291.8L949.5 294.0L951.7 297.4L954.0 299.4L956.2 297.0L958.5 293.8L960.7 292.3L963.0 295.9L965.2 295.7L967.5 288.8L969.7 289.1L972.0 296.5L974.2 291.3L976.5 289.5L978.7 288.4L981.0 289.2L983.2 282.3L985.5 286.0L987.7 280.0L990.0 292.6L992.2 292.4L994.5 295.6L996.7 294.0L999.0 298.4" fill="none" stroke="#158c15" stroke-width="2"/><g fill="#128e12"><circle cx="323.8" cy="298.8" r="2.7"/><circle cx="326.1" cy="299.9" r="2.7"/><circle cx="328.3" cy="296.9" r="2.7"/><circle cx="330.6" cy="299.9" r="2.7"/><circle cx="332.8" cy="299.4" r="2.7"/><circle cx="335.1" cy="297.9" r="2.7"/><circle cx="337.3" cy="292.0" r="2.7"/><circle cx="339.6" cy="283.7" r="2.7"/><circle cx="341.8" cy="280.6" r="2.7"/><circle cx="344.1" cy="283.6" r="2.7"/><circle cx="346.3" cy="259.7" r="2.7"/><circle cx="348.6" cy="284.7" r="2.7"/><circle cx="350.8" cy="293.3" r="2.7"/><circle cx="353.1" cy="296.1" r="2.7"/><circle cx="355.3" cy="296.9" r="2.7"/><circle cx="357.6" cy="294.7" r="2.7"/><circle cx="359.8" cy="293.7" r="2.7"/><circle cx="362.1" cy="294.7" r="2.7"/><circle cx="364.3" cy="297.3" r="2.7"/><circle cx="366.6" cy="293.8" r="2.7"/><circle cx="368.8" cy="282.0" r="2.7"/><circle cx="371.1" cy="281.3" r="2.7"/><circle cx="373.3" cy="298.3" r="2.7"/><circle cx="375.6" cy="297.5" r="2.7"/><circle cx="377.8" cy="298.5" r="2.7"/><circle cx="380.1" cy="295.2" r="2.7"/><circle cx="382.3" cy="284.5" r="2.7"/><circle cx="384.6" cy="281.4" r="2.7"/><circle cx="386.8" cy="285.9" r="2.7"/><circle cx="389.1" cy="260.2" r="2.7"/><circle cx="391.3" cy="278.4" r="2.7"/><circle cx="393.6" cy="287.8" r="2.7"/><circle cx="395.8" cy="290.8" r="2.7"/><circle cx="398.1" cy="297.1" r="2.7"/><circle cx="400.3" cy="298.1" r="2.7"/><circle cx="402.6" cy="283.1" r="2.7"/><circle cx="404.8" cy="286.6" r="2.7"/><circle cx="407.1" cy="294.9" r="2.7"/><circle cx="409.3" cy="294.4" r="2.7"/><circle cx="411.6" cy="286.6" r="2.7"/><circle cx="413.8" cy="286.6" r="2.7"/><circle cx="416.1" cy="295.7" r="2.7"/><circle cx="418.3" cy="288.6" r="2.7"/><circle cx="420.6" cy="284.1" r="2.7"/><circle cx="422.8" cy="296.7" r="2.7"/><circle cx="425.1" cy="283.0" r="2.7"/><circle cx="427.3" cy="277.9" r="2.7"/><circle cx="429.6" cy="283.5" r="2.7"/><circle cx="431.8" cy="293.7" r="2.7"/><circle cx="434.1" cy="293.9" r="2.7"/><circle cx="436.3" cy="285.7" r="2.7"/><circle cx="438.6" cy="288.1" r="2.7"/><circle cx="440.8" cy="276.6" r="2.7"/><circle cx="443.1" cy="263.0" r="2.7"/><circle cx="445.3" cy="278.4" r="2.7"/><circle cx="447.6" cy="293.6" r="2.7"/><circle cx="449.8" cy="284.7" r="2.7"/><circle cx="452.1" cy="295.3" r="2.7"/><circle cx="454.3" cy="285.5" r="2.7"/><circle cx="456.6" cy="295.3" r="2.7"/><circle cx="458.8" cy="286.8" r="2.7"/><circle cx="461.1" cy="282.3" r="2.7"/><circle cx="463.3" cy="298.2" r="2.7"/><circle cx="465.6" cy="297.3" r="2.7"/><circle cx="467.8" cy="298.2" r="2.7"/><circle cx="470.1" cy="291.3" r="2.7"/><circle cx="472.3" cy="289.9" r="2.7"/><circle cx="474.6" cy="285.9" r="2.7"/><circle cx="476.8" cy="283.6" r="2.7"/><circle cx="479.1" cy="280.6" r="2.7"/><circle cx="481.3" cy="278.5" r="2.7"/><circle cx="483.6" cy="286.9" r="2.7"/><circle cx="485.8" cy="291.4" r="2.7"/><circle cx="488.1" cy="295.4" r="2.7"/><circle cx="490.3" cy="299.1" r="2.7"/><circle cx="492.6" cy="279.5" r="2.7"/><circle cx="494.9" cy="284.8" r="2.7"/><circle cx="497.1" cy="277.6" r="2.7"/><circle cx="499.4" cy="279.6" r="2.7"/><circle cx="501.6" cy="296.0" r="2.7"/><circle cx="503.9" cy="298.7" r="2.7"/><circle cx="506.1" cy="296.6" r="2.7"/><circle cx="508.4" cy="292.0" r="2.7"/><circle cx="510.6" cy="290.7" r="2.7"/><circle cx="512.9" cy="292.0" r="2.7"/><circle cx="515.1" cy="292.0" r="2.7"/><circle cx="517.4" cy="290.1" r="2.7"/><circle cx="519.6" cy="297.8" r="2.7"/><circle cx="521.9" cy="282.2" r="2.7"/><circle cx="524.1" cy="295.7" r="2.7"/><circle cx="526.4" cy="290.6" r="2.7"/><circle cx="528.6" cy="284.7" r="2.7"/><circle cx="530.9" cy="288.7" r="2.7"/><circle cx="533.1" cy="296.5" r="2.7"/><circle cx="535.4" cy="292.6" r="2.7"/><circle cx="537.6" cy="287.7" r="2.7"/><circle cx="539.9" cy="281.6" r="2.7"/><circle cx="542.1" cy="286.5" r="2.7"/><circle cx="544.4" cy="295.8" r="2.7"/><circle cx="546.6" cy="285.4" r="2.7"/><circle cx="548.9" cy="293.5" r="2.7"/><circle cx="551.1" cy="297.3" r="2.7"/><circle cx="553.4" cy="297.1" r="2.7"/><circle cx="555.6" cy="298.9" r="2.7"/><circle cx="557.9" cy="294.7" r="2.7"/><circle cx="560.1" cy="291.8" r="2.7"/><circle cx="562.4" cy="297.8" r="2.7"/><circle cx="564.6" cy="295.7" r="2.7"/><circle cx="566.9" cy="292.5" r="2.7"/><circle cx="569.1" cy="293.5" r="2.7"/><circle cx="571.4" cy="291.1" r="2.7"/><circle cx="573.6" cy="298.4" r="2.7"/><circle cx="575.9" cy="278.8" r="2.7"/><circle cx="578.1" cy="272.0" r="2.7"/><circle cx="580.4" cy="259.6" r="2.7"/><circle cx="582.6" cy="279.6" r="2.7"/><circle cx="584.9" cy="283.1" r="2.7"/><circle cx="587.1" cy="265.5" r="2.7"/><circle cx="589.4" cy="298.4" r="2.7"/><circle cx="591.6" cy="296.9" r="2.7"/><circle cx="593.9" cy="299.3" r="2.7"/><circle cx="596.1" cy="298.8" r="2.7"/><circle cx="598.4" cy="299.9" r="2.7"/><circle cx="600.6" cy="296.7" r="2.7"/><circle cx="602.9" cy="299.1" r="2.7"/><circle cx="605.1" cy="296.2" r="2.7"/><circle cx="607.4" cy="284.2" r="2.7"/><circle cx="609.6" cy="285.0" r="2.7"/><circle cx="611.9" cy="297.5" r="2.7"/><circle cx="614.1" cy="292.7" r="2.7"/><circle cx="616.4" cy="281.7" r="2.7"/><circle cx="618.6" cy="289.5" r="2.7"/><circle cx="620.9" cy="298.1" r="2.7"/><circle cx="623.1" cy="294.9" r="2.7"/><circle cx="625.4" cy="290.5" r="2.7"/><circle cx="627.6" cy="293.7" r="2.7"/><circle cx="629.9" cy="299.0" r="2.7"/><circle cx="632.1" cy="277.9" r="2.7"/><circle cx="634.4" cy="299.2" r="2.7"/><circle cx="636.6" cy="294.1" r="2.7"/><circle cx="638.9" cy="284.1" r="2.7"/><circle cx="641.1" cy="288.0" r="2.7"/><circle cx="643.4" cy="288.4" r="2.7"/><circle cx="645.6" cy="299.9" r="2.7"/><circle cx="647.9" cy="279.0" r="2.7"/><circle cx="650.1" cy="275.1" r="2.7"/><circle cx="652.4" cy="286.7" r="2.7"/><circle cx="654.6" cy="285.9" r="2.7"/><circle cx="656.9" cy="277.5" r="2.7"/><circle cx="659.1" cy="281.7" r="2.7"/><circle cx="661.4" cy="294.5" r="2.7"/><circle cx="663.7" cy="295.7" r="2.7"/><circle cx="665.9" cy="298.2" r="2.7"/><circle cx="668.2" cy="289.9" r="2.7"/><circle cx="670.4" cy="294.5" r="2.7"/><circle cx="672.7" cy="288.2" r="2.7"/><circle cx="674.9" cy="298.6" r="2.7"/><circle cx="677.2" cy="298.6" r="2.7"/><circle cx="679.4" cy="290.8" r="2.7"/><circle cx="681.7" cy="298.7" r="2.7"/><circle cx="683.9" cy="296.5" r="2.7"/><circle cx="686.2" cy="298.1" r="2.7"/><circle cx="688.4" cy="298.1" r="2.7"/><circle cx="690.7" cy="292.7" r="2.7"/><circle cx="692.9" cy="288.0" r="2.7"/><circle cx="695.2" cy="289.4" r="2.7"/><circle cx="697.4" cy="291.6" r="2.7"/><circle cx="699.7" cy="292.3" r="2.7"/><circle cx="701.9" cy="293.8" r="2.7"/><circle cx="704.2" cy="298.3" r="2.7"/><circle cx="706.4" cy="290.3" r="2.7"/><circle cx="708.7" cy="283.7" r="2.7"/><circle cx="710.9" cy="285.5" r="2.7"/><circle cx="713.2" cy="282.7" r="2.7"/><circle cx="715.4" cy="296.6" r="2.7"/><circle cx="717.7" cy="287.7" r="2.7"/><circle cx="719.9" cy="297.1" r="2.7"/><circle cx="722.2" cy="286.9" r="2.7"/><circle cx="724.4" cy="296.3" r="2.7"/><circle cx="726.7" cy="296.4" r="2.7"/><circle cx="728.9" cy="290.8" r="2.7"/><circle cx="731.2" cy="291.7" r="2.7"/><circle cx="733.4" cy="290.5" r="2.7"/><circle cx="735.7" cy="283.9" r="2.7"/><circle cx="737.9" cy="276.8" r="2.7"/><circle cx="740.2" cy="279.0" r="2.7"/><circle cx="742.4" cy="289.4" r="2.7"/><circle cx="744.7" cy="280.7" r="2.7"/><circle cx="746.9" cy="288.3" r="2.7"/><circle cx="749.2" cy="296.9" r="2.7"/><circle cx="751.4" cy="299.6" r="2.7"/><circle cx="753.7" cy="299.7" r="2.7"/><circle cx="755.9" cy="296.0" r="2.7"/><circle cx="758.2" cy="296.1" r="2.7"/><circle cx="760.4" cy="287.4" r="2.7"/><circle cx="762.7" cy="289.6" r="2.7"/><circle cx="764.9" cy="287.0" r="2.7"/><circle cx="767.2" cy="293.8" r="2.7"/><circle cx="769.4" cy="295.2" r="2.7"/><circle cx="771.7" cy="290.2" r="2.7"/><circle cx="773.9" cy="285.6" r="2.7"/><circle cx="776.2" cy="295.4" r="2.7"/><circle cx="778.4" cy="291.7" r="2.7"/><circle cx="780.7" cy="295.8" r="2.7"/><circle cx="782.9" cy="297.3" r="2.7"/><circle cx="785.2" cy="295.1" r="2.7"/><circle cx="787.4" cy="293.0" r="2.7"/><circle cx="789.7" cy="280.4" r="2.7"/><circle cx="791.9" cy="291.0" r="2.7"/><circle cx="794.2" cy="299.1" r="2.7"/><circle cx="796.4" cy="284.1" r="2.7"/><circle cx="798.7" cy="287.2" r="2.7"/><circle cx="800.9" cy="290.4" r="2.7"/><circle cx="803.2" cy="298.4" r="2.7"/><circle cx="805.4" cy="292.8" r="2.7"/><circle cx="807.7" cy="288.7" r="2.7"/><circle cx="809.9" cy="282.5" r="2.7"/><circle cx="812.2" cy="294.0" r="2.7"/><circle cx="814.4" cy="282.8" r="2.7"/><circle cx="816.7" cy="282.2" r="2.7"/><circle cx="818.9" cy="277.7" r="2.7"/><circle cx="821.2" cy="287.9" r="2.7"/><circle cx="823.4" cy="298.8" r="2.7"/><circle cx="825.7" cy="297.9" r="2.7"/><circle cx="827.9" cy="298.9" r="2.7"/><circle cx="830.2" cy="295.8" r="2.7"/><circle cx="832.5" cy="298.1" r="2.7"/><circle cx="834.7" cy="298.5" r="2.7"/><circle cx="837.0" cy="297.2" r="2.7"/><circle cx="839.2" cy="285.4" r="2.7"/><circle cx="841.5" cy="288.8" r="2.7"/><circle cx="843.7" cy="289.4" r="2.7"/><circle cx="846.0" cy="291.1" r="2.7"/><circle cx="848.2" cy="291.1" r="2.7"/><circle cx="850.5" cy="294.8" r="2.7"/><circle cx="852.7" cy="299.4" r="2.7"/><circle cx="855.0" cy="299.7" r="2.7"/><circle cx="857.2" cy="299.7" r="2.7"/><circle cx="859.5" cy="295.7" r="2.7"/><circle cx="861.7" cy="286.6" r="2.7"/><circle cx="864.0" cy="284.0" r="2.7"/><circle cx="866.2" cy="299.2" r="2.7"/><circle cx="868.5" cy="299.9" r="2.7"/><circle cx="870.7" cy="295.0" r="2.7"/><circle cx="873.0" cy="296.3" r="2.7"/><circle cx="875.2" cy="296.5" r="2.7"/><circle cx="877.5" cy="298.8" r="2.7"/><circle cx="879.7" cy="293.5" r="2.7"/><circle cx="882.0" cy="291.3" r="2.7"/><circle cx="884.2" cy="287.6" r="2.7"/><circle cx="886.5" cy="291.1" r="2.7"/><circle cx="888.7" cy="292.9" r="2.7"/><circle cx="891.0" cy="287.3" r="2.7"/><circle cx="893.2" cy="285.6" r="2.7"/><circle cx="895.5" cy="291.7" r="2.7"/><circle cx="897.7" cy="296.4" r="2.7"/><circle cx="900.0" cy="290.5" r="2.7"/><circle cx="902.2" cy="282.5" r="2.7"/><circle cx="904.5" cy="293.3" r="2.7"/><circle cx="906.7" cy="296.4" r="2.7"/><circle cx="909.0" cy="292.8" r="2.7"/><circle cx="911.2" cy="291.5" r="2.7"/><circle cx="913.5" cy="299.0" r="2.7"/><circle cx="915.7" cy="296.3" r="2.7"/><circle cx="918.0" cy="291.9" r="2.7"/><circle cx="920.2" cy="294.1" r="2.7"/><circle cx="922.5" cy="296.0" r="2.7"/><circle cx="924.7" cy="293.4" r="2.7"/><circle cx="927.0" cy="291.8" r="2.7"/><circle cx="929.2" cy="288.7" r="2.7"/><circle cx="931.5" cy="278.0" r="2.7"/><circle cx="933.7" cy="298.7" r="2.7"/><circle cx="936.0" cy="296.4" r="2.7"/><circle cx="938.2" cy="295.4" r="2.7"/><circle cx="940.5" cy="291.7" r="2.7"/><circle cx="942.7" cy="293.9" r="2.7"/><circle cx="945.0" cy="292.3" r="2.7"/><circle cx="947.2" cy="291.8" r="2.7"/><circle cx="949.5" cy="294.0" r="2.7"/><circle cx="951.7" cy="297.4" r="2.7"/><circle cx="954.0" cy="299.4" r="2.7"/><circle cx="956.2" cy="297.0" r="2.7"/><circle cx="958.5" cy="293.8" r="2.7"/><circle cx="960.7" cy="292.3" r="2.7"/><circle cx="963.0" cy="295.9" r="2.7"/><circle cx="965.2" cy="295.7" r="2.7"/><circle cx="967.5" cy="288.8" r="2.7"/><circle cx="969.7" cy="289.1" r="2.7"/><circle cx="972.0" cy="296.5" r="2.7"/><circle cx="974.2" cy="291.3" r="2.7"/><circle cx="976.5" cy="289.5" r="2.7"/><circle cx="978.7" cy="288.4" r="2.7"/><circle cx="981.0" cy="289.2" r="2.7"/><circle cx="983.2" cy="282.3" r="2.7"/><circle cx="985.5" cy="286.0" r="2.7"/><circle cx="987.7" cy="280.0" r="2.7"/><circle cx="990.0" cy="292.6" r="2.7"/><circle cx="992.2" cy="292.4" r="2.7"/><circle cx="994.5" cy="295.6" r="2.7"/><circle cx="996.7" cy="294.0" r="2.7"/><circle cx="999.0" cy="298.4" r="2.7"/></g><circle cx="346.5" cy="251.9" r="2.4" fill="#c9f22a"/><circle cx="389.2" cy="256.6" r="2.4" fill="#c9f22a"/><circle cx="580.7" cy="252.5" r="2.4" fill="#c9f22a"/></svg><div class="tl" style="left:73.30000000000001px;width:240px;text-align:right;top:233.3px">100</div><div class="tl" style="left:73.30000000000001px;width:240px;text-align:right;top:262.4px">50</div><div class="tl" style="left:73.30000000000001px;width:240px;text-align:right;top:291.5px">0</div><div class="tl" style="left:283.8px;width:80px;text-align:center;top:310.2px">-5:00</div><div class="tl" style="left:351.3px;width:80px;text-align:center;top:310.2px">-4:30</div><div class="tl" style="left:418.8px;width:80px;text-align:center;top:310.2px">-4:00</div><div class="tl" style="left:486.4px;width:80px;text-align:center;top:310.2px">-3:30</div><div class="tl" style="left:553.9px;width:80px;text-align:center;top:310.2px">-3:00</div><div class="tl" style="left:621.4px;width:80px;text-align:center;top:310.2px">-2:30</div><div class="tl" style="left:688.9px;width:80px;text-align:center;top:310.2px">-2:00</div><div class="tl" style="left:756.4px;width:80px;text-align:center;top:310.2px">-1:30</div><div class="tl" style="left:824.0px;width:80px;text-align:center;top:310.2px">-1:00</div><div class="tl" style="left:891.5px;width:80px;text-align:center;top:310.2px">-0:30</div><div class="tl" style="left:959.0px;width:80px;text-align:center;top:310.2px">0:00</div><div class="yt" style="left:255px;top:327px;font-size:16.4px">Исполз. ЦП</div><div class="panel" style="top:339px;height:130px"></div><div class="ttl" style="left:275px;width:757px;text-align:center;top:348px">GPU: 0 (avg)</div><svg class="abs" style="left:0;top:0" width="1057" height="760" viewBox="0 0 1057 760"><line x1="309.5" y1="376.0" x2="999" y2="376.0" stroke="#4d5056" stroke-width="1"/><line x1="309.5" y1="405.1" x2="999" y2="405.1" stroke="#4d5056" stroke-width="1"/><line x1="309.5" y1="434.2" x2="999" y2="434.2" stroke="#4d5056" stroke-width="1"/><line x1="319.5" y1="376" x2="319.5" y2="443.2" stroke="#383b41" stroke-width="1"/><line x1="387.4" y1="376" x2="387.4" y2="443.2" stroke="#383b41" stroke-width="1"/><line x1="455.4" y1="376" x2="455.4" y2="443.2" stroke="#383b41" stroke-width="1"/><line x1="523.4" y1="376" x2="523.4" y2="443.2" stroke="#383b41" stroke-width="1"/><line x1="591.3" y1="376" x2="591.3" y2="443.2" stroke="#383b41" stroke-width="1"/><line x1="659.2" y1="376" x2="659.2" y2="443.2" stroke="#383b41" stroke-width="1"/><line x1="727.2" y1="376" x2="727.2" y2="443.2" stroke="#383b41" stroke-width="1"/><line x1="795.1" y1="376" x2="795.1" y2="443.2" stroke="#383b41" stroke-width="1"/><line x1="863.1" y1="376" x2="863.1" y2="443.2" stroke="#383b41" stroke-width="1"/><line x1="931.0" y1="376" x2="931.0" y2="443.2" stroke="#383b41" stroke-width="1"/><line x1="999.0" y1="376" x2="999.0" y2="443.2" stroke="#383b41" stroke-width="1"/><line x1="319.5" y1="376" x2="319.5" y2="443.2" stroke="#45484e" stroke-width="1"/><line x1="319.5" y1="434.2" x2="999" y2="434.2" stroke="#178a17" stroke-width="3"/></svg><div class="tl" style="left:69.0px;width:240px;text-align:right;top:367.3px">1.0</div><div class="tl" style="left:69.0px;width:240px;text-align:right;top:396.4px">0.5</div><div class="tl" style="left:69.0px;width:240px;text-align:right;top:425.5px">0</div><div class="tl" style="left:279.5px;width:80px;text-align:center;top:444.2px">-5:00</div><div class="tl" style="left:347.4px;width:80px;text-align:center;top:444.2px">-4:30</div><div class="tl" style="left:415.4px;width:80px;text-align:center;top:444.2px">-4:00</div><div class="tl" style="left:483.4px;width:80px;text-align:center;top:444.2px">-3:30</div><div class="tl" style="left:551.3px;width:80px;text-align:center;top:444.2px">-3:00</div><div class="tl" style="left:619.2px;width:80px;text-align:center;top:444.2px">-2:30</div><div class="tl" style="left:687.2px;width:80px;text-align:center;top:444.2px">-2:00</div><div class="tl" style="left:755.1px;width:80px;text-align:center;top:444.2px">-1:30</div><div class="tl" style="left:823.1px;width:80px;text-align:center;top:444.2px">-1:00</div><div class="tl" style="left:891.0px;width:80px;text-align:center;top:444.2px">-0:30</div><div class="tl" style="left:959.0px;width:80px;text-align:center;top:444.2px">0:00</div><div class="yt" style="left:255px;top:462px;font-size:16.5px">Исполз. ГП</div><div class="panel" style="top:473px;height:130px"></div><div class="ttl" style="left:275px;width:757px;text-align:center;top:482px">RX: 0.15 (avg)    TX: 0.01 / 0.06 / 1 (min/avg/max)</div><svg class="abs" style="left:0;top:0" width="1057" height="760" viewBox="0 0 1057 760"><line x1="309.5" y1="510.0" x2="999" y2="510.0" stroke="#4d5056" stroke-width="1"/><line x1="309.5" y1="529.4" x2="999" y2="529.4" stroke="#4d5056" stroke-width="1"/><line x1="309.5" y1="548.8" x2="999" y2="548.8" stroke="#4d5056" stroke-width="1"/><line x1="309.5" y1="568.2" x2="999" y2="568.2" stroke="#4d5056" stroke-width="1"/><line x1="319.5" y1="510" x2="319.5" y2="577.2" stroke="#383b41" stroke-width="1"/><line x1="387.4" y1="510" x2="387.4" y2="577.2" stroke="#383b41" stroke-width="1"/><line x1="455.4" y1="510" x2="455.4" y2="577.2" stroke="#383b41" stroke-width="1"/><line x1="523.4" y1="510" x2="523.4" y2="577.2" stroke="#383b41" stroke-width="1"/><line x1="591.3" y1="510" x2="591.3" y2="577.2" stroke="#383b41" stroke-width="1"/><line x1="659.2" y1="510" x2="659.2" y2="577.2" stroke="#383b41" stroke-width="1"/><line x1="727.2" y1="510" x2="727.2" y2="577.2" stroke="#383b41" stroke-width="1"/><line x1="795.1" y1="510" x2="795.1" y2="577.2" stroke="#383b41" stroke-width="1"/><line x1="863.1" y1="510" x2="863.1" y2="577.2" stroke="#383b41" stroke-width="1"/><line x1="931.0" y1="510" x2="931.0" y2="577.2" stroke="#383b41" stroke-width="1"/><line x1="999.0" y1="510" x2="999.0" y2="577.2" stroke="#383b41" stroke-width="1"/><line x1="319.5" y1="510" x2="319.5" y2="577.2" stroke="#45484e" stroke-width="1"/><path d="M319.5 568.2L321.8 568.2L324.0 568.2L326.3 568.2L328.6 568.2L330.8 568.2L333.1 568.2L335.4 564.3L337.6 568.2L339.9 568.2L342.1 568.2L344.4 568.2L346.7 568.2L348.9 568.2L351.2 568.2L353.5 568.2L355.7 568.2L358.0 568.2L360.3 556.6L362.5 568.2L364.8 568.2L367.1 568.2L369.3 568.2L371.6 568.2L373.9 568.2L376.1 568.2L378.4 568.2L380.7 568.2L382.9 568.2L385.2 568.2L387.4 568.2L389.7 568.2L392.0 568.2L394.2 568.2L396.5 568.2L398.8 568.2L401.0 568.2L403.3 556.6L405.6 568.2L407.8 568.2L410.1 568.2L412.4 556.6L414.6 568.2L416.9 556.6L419.2 568.2L421.4 568.2L423.7 568.2L426.0 568.2L428.2 568.2L430.5 568.2L432.8 568.2L435.0 568.2L437.3 568.2L439.5 568.2L441.8 568.2L444.1 556.6L446.3 556.6L448.6 568.2L450.9 568.2L453.1 556.6L455.4 568.2L457.7 568.2L459.9 568.2L462.2 556.6L464.5 568.2L466.7 568.2L469.0 568.2L471.3 568.2L473.5 525.5L475.8 568.2L478.1 568.2L480.3 568.2L482.6 568.2L484.8 568.2L487.1 568.2L489.4 568.2L491.6 556.6L493.9 568.2L496.2 568.2L498.4 568.2L500.7 568.2L503.0 568.2L505.2 568.2L507.5 568.2L509.8 568.2L512.0 568.2L514.3 568.2L516.6 568.2L518.8 556.6L521.1 568.2L523.4 560.4L525.6 568.2L527.9 568.2L530.1 568.2L532.4 556.6L534.7 568.2L536.9 568.2L539.2 568.2L541.5 556.6L543.7 568.2L546.0 568.2L548.3 568.2L550.5 568.2L552.8 568.2L555.1 568.2L557.3 568.2L559.6 568.2L561.9 568.2L564.1 568.2L566.4 568.2L568.6 556.6L570.9 568.2L573.2 568.2L575.4 568.2L577.7 568.2L580.0 568.2L582.2 568.2L584.5 568.2L586.8 568.2L589.0 568.2L591.3 568.2L593.6 568.2L595.8 568.2L598.1 568.2L600.4 568.2L602.6 556.6L604.9 568.2L607.2 568.2L609.4 568.2L611.7 568.2L614.0 568.2L616.2 568.2L618.5 568.2L620.7 568.2L623.0 568.2L625.3 568.2L627.5 568.2L629.8 568.2L632.1 556.6L634.3 568.2L636.6 568.2L638.9 568.2L641.1 568.2L643.4 568.2L645.7 568.2L647.9 568.2L650.2 568.2L652.5 568.2L654.7 568.2L657.0 568.2L659.2 568.2L661.5 568.2L663.8 556.6L666.0 568.2L668.3 556.6L670.6 568.2L672.8 568.2L675.1 568.2L677.4 568.2L679.6 568.2L681.9 568.2L684.2 568.2L686.4 568.2L688.7 568.2L691.0 568.2L693.2 556.6L695.5 568.2L697.8 568.2L700.0 568.2L702.3 568.2L704.5 568.2L706.8 568.2L709.1 568.2L711.3 568.2L713.6 568.2L715.9 568.2L718.1 568.2L720.4 568.2L722.7 568.2L724.9 568.2L727.2 568.2L729.5 568.2L731.7 548.8L734.0 568.2L736.3 568.2L738.5 568.2L740.8 556.6L743.1 568.2L745.3 568.2L747.6 568.2L749.9 568.2L752.1 568.2L754.4 556.6L756.6 568.2L758.9 568.2L761.2 568.2L763.4 568.2L765.7 568.2L768.0 556.6L770.2 568.2L772.5 568.2L774.8 568.2L777.0 568.2L779.3 568.2L781.6 568.2L783.8 556.6L786.1 568.2L788.4 568.2L790.6 568.2L792.9 568.2L795.2 568.2L797.4 558.5L799.7 568.2L801.9 568.2L804.2 568.2L806.5 568.2L808.7 568.2L811.0 568.2L813.3 568.2L815.5 556.6L817.8 568.2L820.1 568.2L822.3 568.2L824.6 568.2L826.9 568.2L829.1 568.2L831.4 568.2L833.7 568.2L835.9 568.2L838.2 568.2L840.5 568.2L842.7 568.2L845.0 568.2L847.2 556.6L849.5 568.2L851.8 568.2L854.0 568.2L856.3 568.2L858.6 568.2L860.8 568.2L863.1 568.2L865.4 568.2L867.6 568.2L869.9 568.2L872.2 568.2L874.4 568.2L876.7 568.2L879.0 568.2L881.2 568.2L883.5 568.2L885.8 568.2L888.0 568.2L890.3 568.2L892.5 568.2L894.8 568.2L897.1 568.2L899.3 560.4L901.6 568.2L903.9 568.2L906.1 568.2L908.4 556.6L910.7 568.2L912.9 568.2L915.2 568.2L917.5 568.2L919.7 568.2L922.0 568.2L924.3 568.2L926.5 556.6L928.8 556.6L931.1 568.2L933.3 568.2L935.6 568.2L937.8 568.2L940.1 556.6L942.4 568.2L944.6 568.2L946.9 568.2L949.2 568.2L951.4 568.2L953.7 568.2L956.0 568.2L958.2 568.2L960.5 568.2L962.8 568.2L965.0 568.2L967.3 568.2L969.6 568.2L971.8 568.2L974.1 568.2L976.4 556.6L978.6 568.2L980.9 568.2L983.1 556.6L985.4 568.2L987.7 568.2L989.9 568.2L992.2 568.2L994.5 568.2L996.7 568.2L999.0 568.2" fill="none" stroke="#3fb873" stroke-width="1.4"/><g fill="#5fd08f"><circle cx="319.5" cy="568.2" r="1.3"/><circle cx="321.8" cy="568.2" r="1.3"/><circle cx="324.0" cy="568.2" r="1.3"/><circle cx="326.3" cy="568.2" r="1.3"/><circle cx="328.6" cy="568.2" r="1.3"/><circle cx="330.8" cy="568.2" r="1.3"/><circle cx="333.1" cy="568.2" r="1.3"/><circle cx="335.4" cy="564.3" r="1.3"/><circle cx="337.6" cy="568.2" r="1.3"/><circle cx="339.9" cy="568.2" r="1.3"/><circle cx="342.1" cy="568.2" r="1.3"/><circle cx="344.4" cy="568.2" r="1.3"/><circle cx="346.7" cy="568.2" r="1.3"/><circle cx="348.9" cy="568.2" r="1.3"/><circle cx="351.2" cy="568.2" r="1.3"/><circle cx="353.5" cy="568.2" r="1.3"/><circle cx="355.7" cy="568.2" r="1.3"/><circle cx="358.0" cy="568.2" r="1.3"/><circle cx="360.3" cy="556.6" r="1.3"/><circle cx="362.5" cy="568.2" r="1.3"/><circle cx="364.8" cy="568.2" r="1.3"/><circle cx="367.1" cy="568.2" r="1.3"/><circle cx="369.3" cy="568.2" r="1.3"/><circle cx="371.6" cy="568.2" r="1.3"/><circle cx="373.9" cy="568.2" r="1.3"/><circle cx="376.1" cy="568.2" r="1.3"/><circle cx="378.4" cy="568.2" r="1.3"/><circle cx="380.7" cy="568.2" r="1.3"/><circle cx="382.9" cy="568.2" r="1.3"/><circle cx="385.2" cy="568.2" r="1.3"/><circle cx="387.4" cy="568.2" r="1.3"/><circle cx="389.7" cy="568.2" r="1.3"/><circle cx="392.0" cy="568.2" r="1.3"/><circle cx="394.2" cy="568.2" r="1.3"/><circle cx="396.5" cy="568.2" r="1.3"/><circle cx="398.8" cy="568.2" r="1.3"/><circle cx="401.0" cy="568.2" r="1.3"/><circle cx="403.3" cy="556.6" r="1.3"/><circle cx="405.6" cy="568.2" r="1.3"/><circle cx="407.8" cy="568.2" r="1.3"/><circle cx="410.1" cy="568.2" r="1.3"/><circle cx="412.4" cy="556.6" r="1.3"/><circle cx="414.6" cy="568.2" r="1.3"/><circle cx="416.9" cy="556.6" r="1.3"/><circle cx="419.2" cy="568.2" r="1.3"/><circle cx="421.4" cy="568.2" r="1.3"/><circle cx="423.7" cy="568.2" r="1.3"/><circle cx="426.0" cy="568.2" r="1.3"/><circle cx="428.2" cy="568.2" r="1.3"/><circle cx="430.5" cy="568.2" r="1.3"/><circle cx="432.8" cy="568.2" r="1.3"/><circle cx="435.0" cy="568.2" r="1.3"/><circle cx="437.3" cy="568.2" r="1.3"/><circle cx="439.5" cy="568.2" r="1.3"/><circle cx="441.8" cy="568.2" r="1.3"/><circle cx="444.1" cy="556.6" r="1.3"/><circle cx="446.3" cy="556.6" r="1.3"/><circle cx="448.6" cy="568.2" r="1.3"/><circle cx="450.9" cy="568.2" r="1.3"/><circle cx="453.1" cy="556.6" r="1.3"/><circle cx="455.4" cy="568.2" r="1.3"/><circle cx="457.7" cy="568.2" r="1.3"/><circle cx="459.9" cy="568.2" r="1.3"/><circle cx="462.2" cy="556.6" r="1.3"/><circle cx="464.5" cy="568.2" r="1.3"/><circle cx="466.7" cy="568.2" r="1.3"/><circle cx="469.0" cy="568.2" r="1.3"/><circle cx="471.3" cy="568.2" r="1.3"/><circle cx="473.5" cy="525.5" r="1.3"/><circle cx="475.8" cy="568.2" r="1.3"/><circle cx="478.1" cy="568.2" r="1.3"/><circle cx="480.3" cy="568.2" r="1.3"/><circle cx="482.6" cy="568.2" r="1.3"/><circle cx="484.8" cy="568.2" r="1.3"/><circle cx="487.1" cy="568.2" r="1.3"/><circle cx="489.4" cy="568.2" r="1.3"/><circle cx="491.6" cy="556.6" r="1.3"/><circle cx="493.9" cy="568.2" r="1.3"/><circle cx="496.2" cy="568.2" r="1.3"/><circle cx="498.4" cy="568.2" r="1.3"/><circle cx="500.7" cy="568.2" r="1.3"/><circle cx="503.0" cy="568.2" r="1.3"/><circle cx="505.2" cy="568.2" r="1.3"/><circle cx="507.5" cy="568.2" r="1.3"/><circle cx="509.8" cy="568.2" r="1.3"/><circle cx="512.0" cy="568.2" r="1.3"/><circle cx="514.3" cy="568.2" r="1.3"/><circle cx="516.6" cy="568.2" r="1.3"/><circle cx="518.8" cy="556.6" r="1.3"/><circle cx="521.1" cy="568.2" r="1.3"/><circle cx="523.4" cy="560.4" r="1.3"/><circle cx="525.6" cy="568.2" r="1.3"/><circle cx="527.9" cy="568.2" r="1.3"/><circle cx="530.1" cy="568.2" r="1.3"/><circle cx="532.4" cy="556.6" r="1.3"/><circle cx="534.7" cy="568.2" r="1.3"/><circle cx="536.9" cy="568.2" r="1.3"/><circle cx="539.2" cy="568.2" r="1.3"/><circle cx="541.5" cy="556.6" r="1.3"/><circle cx="543.7" cy="568.2" r="1.3"/><circle cx="546.0" cy="568.2" r="1.3"/><circle cx="548.3" cy="568.2" r="1.3"/><circle cx="550.5" cy="568.2" r="1.3"/><circle cx="552.8" cy="568.2" r="1.3"/><circle cx="555.1" cy="568.2" r="1.3"/><circle cx="557.3" cy="568.2" r="1.3"/><circle cx="559.6" cy="568.2" r="1.3"/><circle cx="561.9" cy="568.2" r="1.3"/><circle cx="564.1" cy="568.2" r="1.3"/><circle cx="566.4" cy="568.2" r="1.3"/><circle cx="568.6" cy="556.6" r="1.3"/><circle cx="570.9" cy="568.2" r="1.3"/><circle cx="573.2" cy="568.2" r="1.3"/><circle cx="575.4" cy="568.2" r="1.3"/><circle cx="577.7" cy="568.2" r="1.3"/><circle cx="580.0" cy="568.2" r="1.3"/><circle cx="582.2" cy="568.2" r="1.3"/><circle cx="584.5" cy="568.2" r="1.3"/><circle cx="586.8" cy="568.2" r="1.3"/><circle cx="589.0" cy="568.2" r="1.3"/><circle cx="591.3" cy="568.2" r="1.3"/><circle cx="593.6" cy="568.2" r="1.3"/><circle cx="595.8" cy="568.2" r="1.3"/><circle cx="598.1" cy="568.2" r="1.3"/><circle cx="600.4" cy="568.2" r="1.3"/><circle cx="602.6" cy="556.6" r="1.3"/><circle cx="604.9" cy="568.2" r="1.3"/><circle cx="607.2" cy="568.2" r="1.3"/><circle cx="609.4" cy="568.2" r="1.3"/><circle cx="611.7" cy="568.2" r="1.3"/><circle cx="614.0" cy="568.2" r="1.3"/><circle cx="616.2" cy="568.2" r="1.3"/><circle cx="618.5" cy="568.2" r="1.3"/><circle cx="620.7" cy="568.2" r="1.3"/><circle cx="623.0" cy="568.2" r="1.3"/><circle cx="625.3" cy="568.2" r="1.3"/><circle cx="627.5" cy="568.2" r="1.3"/><circle cx="629.8" cy="568.2" r="1.3"/><circle cx="632.1" cy="556.6" r="1.3"/><circle cx="634.3" cy="568.2" r="1.3"/><circle cx="636.6" cy="568.2" r="1.3"/><circle cx="638.9" cy="568.2" r="1.3"/><circle cx="641.1" cy="568.2" r="1.3"/><circle cx="643.4" cy="568.2" r="1.3"/><circle cx="645.7" cy="568.2" r="1.3"/><circle cx="647.9" cy="568.2" r="1.3"/><circle cx="650.2" cy="568.2" r="1.3"/><circle cx="652.5" cy="568.2" r="1.3"/><circle cx="654.7" cy="568.2" r="1.3"/><circle cx="657.0" cy="568.2" r="1.3"/><circle cx="659.2" cy="568.2" r="1.3"/><circle cx="661.5" cy="568.2" r="1.3"/><circle cx="663.8" cy="556.6" r="1.3"/><circle cx="666.0" cy="568.2" r="1.3"/><circle cx="668.3" cy="556.6" r="1.3"/><circle cx="670.6" cy="568.2" r="1.3"/><circle cx="672.8" cy="568.2" r="1.3"/><circle cx="675.1" cy="568.2" r="1.3"/><circle cx="677.4" cy="568.2" r="1.3"/><circle cx="679.6" cy="568.2" r="1.3"/><circle cx="681.9" cy="568.2" r="1.3"/><circle cx="684.2" cy="568.2" r="1.3"/><circle cx="686.4" cy="568.2" r="1.3"/><circle cx="688.7" cy="568.2" r="1.3"/><circle cx="691.0" cy="568.2" r="1.3"/><circle cx="693.2" cy="556.6" r="1.3"/><circle cx="695.5" cy="568.2" r="1.3"/><circle cx="697.8" cy="568.2" r="1.3"/><circle cx="700.0" cy="568.2" r="1.3"/><circle cx="702.3" cy="568.2" r="1.3"/><circle cx="704.5" cy="568.2" r="1.3"/><circle cx="706.8" cy="568.2" r="1.3"/><circle cx="709.1" cy="568.2" r="1.3"/><circle cx="711.3" cy="568.2" r="1.3"/><circle cx="713.6" cy="568.2" r="1.3"/><circle cx="715.9" cy="568.2" r="1.3"/><circle cx="718.1" cy="568.2" r="1.3"/><circle cx="720.4" cy="568.2" r="1.3"/><circle cx="722.7" cy="568.2" r="1.3"/><circle cx="724.9" cy="568.2" r="1.3"/><circle cx="727.2" cy="568.2" r="1.3"/><circle cx="729.5" cy="568.2" r="1.3"/><circle cx="731.7" cy="548.8" r="1.3"/><circle cx="734.0" cy="568.2" r="1.3"/><circle cx="736.3" cy="568.2" r="1.3"/><circle cx="738.5" cy="568.2" r="1.3"/><circle cx="740.8" cy="556.6" r="1.3"/><circle cx="743.1" cy="568.2" r="1.3"/><circle cx="745.3" cy="568.2" r="1.3"/><circle cx="747.6" cy="568.2" r="1.3"/><circle cx="749.9" cy="568.2" r="1.3"/><circle cx="752.1" cy="568.2" r="1.3"/><circle cx="754.4" cy="556.6" r="1.3"/><circle cx="756.6" cy="568.2" r="1.3"/><circle cx="758.9" cy="568.2" r="1.3"/><circle cx="761.2" cy="568.2" r="1.3"/><circle cx="763.4" cy="568.2" r="1.3"/><circle cx="765.7" cy="568.2" r="1.3"/><circle cx="768.0" cy="556.6" r="1.3"/><circle cx="770.2" cy="568.2" r="1.3"/><circle cx="772.5" cy="568.2" r="1.3"/><circle cx="774.8" cy="568.2" r="1.3"/><circle cx="777.0" cy="568.2" r="1.3"/><circle cx="779.3" cy="568.2" r="1.3"/><circle cx="781.6" cy="568.2" r="1.3"/><circle cx="783.8" cy="556.6" r="1.3"/><circle cx="786.1" cy="568.2" r="1.3"/><circle cx="788.4" cy="568.2" r="1.3"/><circle cx="790.6" cy="568.2" r="1.3"/><circle cx="792.9" cy="568.2" r="1.3"/><circle cx="795.2" cy="568.2" r="1.3"/><circle cx="797.4" cy="558.5" r="1.3"/><circle cx="799.7" cy="568.2" r="1.3"/><circle cx="801.9" cy="568.2" r="1.3"/><circle cx="804.2" cy="568.2" r="1.3"/><circle cx="806.5" cy="568.2" r="1.3"/><circle cx="808.7" cy="568.2" r="1.3"/><circle cx="811.0" cy="568.2" r="1.3"/><circle cx="813.3" cy="568.2" r="1.3"/><circle cx="815.5" cy="556.6" r="1.3"/><circle cx="817.8" cy="568.2" r="1.3"/><circle cx="820.1" cy="568.2" r="1.3"/><circle cx="822.3" cy="568.2" r="1.3"/><circle cx="824.6" cy="568.2" r="1.3"/><circle cx="826.9" cy="568.2" r="1.3"/><circle cx="829.1" cy="568.2" r="1.3"/><circle cx="831.4" cy="568.2" r="1.3"/><circle cx="833.7" cy="568.2" r="1.3"/><circle cx="835.9" cy="568.2" r="1.3"/><circle cx="838.2" cy="568.2" r="1.3"/><circle cx="840.5" cy="568.2" r="1.3"/><circle cx="842.7" cy="568.2" r="1.3"/><circle cx="845.0" cy="568.2" r="1.3"/><circle cx="847.2" cy="556.6" r="1.3"/><circle cx="849.5" cy="568.2" r="1.3"/><circle cx="851.8" cy="568.2" r="1.3"/><circle cx="854.0" cy="568.2" r="1.3"/><circle cx="856.3" cy="568.2" r="1.3"/><circle cx="858.6" cy="568.2" r="1.3"/><circle cx="860.8" cy="568.2" r="1.3"/><circle cx="863.1" cy="568.2" r="1.3"/><circle cx="865.4" cy="568.2" r="1.3"/><circle cx="867.6" cy="568.2" r="1.3"/><circle cx="869.9" cy="568.2" r="1.3"/><circle cx="872.2" cy="568.2" r="1.3"/><circle cx="874.4" cy="568.2" r="1.3"/><circle cx="876.7" cy="568.2" r="1.3"/><circle cx="879.0" cy="568.2" r="1.3"/><circle cx="881.2" cy="568.2" r="1.3"/><circle cx="883.5" cy="568.2" r="1.3"/><circle cx="885.8" cy="568.2" r="1.3"/><circle cx="888.0" cy="568.2" r="1.3"/><circle cx="890.3" cy="568.2" r="1.3"/><circle cx="892.5" cy="568.2" r="1.3"/><circle cx="894.8" cy="568.2" r="1.3"/><circle cx="897.1" cy="568.2" r="1.3"/><circle cx="899.3" cy="560.4" r="1.3"/><circle cx="901.6" cy="568.2" r="1.3"/><circle cx="903.9" cy="568.2" r="1.3"/><circle cx="906.1" cy="568.2" r="1.3"/><circle cx="908.4" cy="556.6" r="1.3"/><circle cx="910.7" cy="568.2" r="1.3"/><circle cx="912.9" cy="568.2" r="1.3"/><circle cx="915.2" cy="568.2" r="1.3"/><circle cx="917.5" cy="568.2" r="1.3"/><circle cx="919.7" cy="568.2" r="1.3"/><circle cx="922.0" cy="568.2" r="1.3"/><circle cx="924.3" cy="568.2" r="1.3"/><circle cx="926.5" cy="556.6" r="1.3"/><circle cx="928.8" cy="556.6" r="1.3"/><circle cx="931.1" cy="568.2" r="1.3"/><circle cx="933.3" cy="568.2" r="1.3"/><circle cx="935.6" cy="568.2" r="1.3"/><circle cx="937.8" cy="568.2" r="1.3"/><circle cx="940.1" cy="556.6" r="1.3"/><circle cx="942.4" cy="568.2" r="1.3"/><circle cx="944.6" cy="568.2" r="1.3"/><circle cx="946.9" cy="568.2" r="1.3"/><circle cx="949.2" cy="568.2" r="1.3"/><circle cx="951.4" cy="568.2" r="1.3"/><circle cx="953.7" cy="568.2" r="1.3"/><circle cx="956.0" cy="568.2" r="1.3"/><circle cx="958.2" cy="568.2" r="1.3"/><circle cx="960.5" cy="568.2" r="1.3"/><circle cx="962.8" cy="568.2" r="1.3"/><circle cx="965.0" cy="568.2" r="1.3"/><circle cx="967.3" cy="568.2" r="1.3"/><circle cx="969.6" cy="568.2" r="1.3"/><circle cx="971.8" cy="568.2" r="1.3"/><circle cx="974.1" cy="568.2" r="1.3"/><circle cx="976.4" cy="556.6" r="1.3"/><circle cx="978.6" cy="568.2" r="1.3"/><circle cx="980.9" cy="568.2" r="1.3"/><circle cx="983.1" cy="556.6" r="1.3"/><circle cx="985.4" cy="568.2" r="1.3"/><circle cx="987.7" cy="568.2" r="1.3"/><circle cx="989.9" cy="568.2" r="1.3"/><circle cx="992.2" cy="568.2" r="1.3"/><circle cx="994.5" cy="568.2" r="1.3"/><circle cx="996.7" cy="568.2" r="1.3"/><circle cx="999.0" cy="568.2" r="1.3"/></g><path d="M319.5 568.2L321.8 568.2L324.0 568.2L326.3 568.2L328.6 568.2L330.8 558.5L333.1 568.2L335.4 568.2L337.6 568.2L339.9 568.2L342.1 568.2L344.4 568.2L346.7 568.2L348.9 568.2L351.2 568.2L353.5 568.2L355.7 568.2L358.0 568.2L360.3 529.4L362.5 568.2L364.8 568.2L367.1 568.2L369.3 568.2L371.6 568.2L373.9 568.2L376.1 568.2L378.4 568.2L380.7 568.2L382.9 568.2L385.2 568.2L387.4 568.2L389.7 568.2L392.0 568.2L394.2 568.2L396.5 568.2L398.8 568.2L401.0 568.2L403.3 529.4L405.6 568.2L407.8 568.2L410.1 568.2L412.4 529.4L414.6 568.2L416.9 529.4L419.2 535.2L421.4 568.2L423.7 568.2L426.0 568.2L428.2 568.2L430.5 568.2L432.8 568.2L435.0 568.2L437.3 568.2L439.5 568.2L441.8 568.2L444.1 529.4L446.3 535.2L448.6 568.2L450.9 568.2L453.1 529.4L455.4 568.2L457.7 568.2L459.9 568.2L462.2 529.4L464.5 568.2L466.7 568.2L469.0 568.2L471.3 568.2L473.5 535.2L475.8 568.2L478.1 568.2L480.3 568.2L482.6 568.2L484.8 568.2L487.1 568.2L489.4 568.2L491.6 529.4L493.9 568.2L496.2 568.2L498.4 568.2L500.7 568.2L503.0 568.2L505.2 568.2L507.5 568.2L509.8 568.2L512.0 568.2L514.3 568.2L516.6 568.2L518.8 537.2L521.1 568.2L523.4 531.3L525.6 568.2L527.9 568.2L530.1 568.2L532.4 531.3L534.7 568.2L536.9 568.2L539.2 568.2L541.5 537.2L543.7 568.2L546.0 568.2L548.3 568.2L550.5 568.2L552.8 568.2L555.1 568.2L557.3 568.2L559.6 568.2L561.9 568.2L564.1 568.2L566.4 568.2L568.6 531.3L570.9 568.2L573.2 568.2L575.4 568.2L577.7 568.2L580.0 568.2L582.2 568.2L584.5 568.2L586.8 568.2L589.0 568.2L591.3 568.2L593.6 568.2L595.8 568.2L598.1 568.2L600.4 568.2L602.6 529.4L604.9 568.2L607.2 568.2L609.4 568.2L611.7 568.2L614.0 568.2L616.2 568.2L618.5 568.2L620.7 568.2L623.0 568.2L625.3 568.2L627.5 568.2L629.8 568.2L632.1 537.2L634.3 568.2L636.6 568.2L638.9 568.2L641.1 568.2L643.4 568.2L645.7 568.2L647.9 568.2L650.2 568.2L652.5 568.2L654.7 568.2L657.0 568.2L659.2 568.2L661.5 568.2L663.8 529.4L666.0 568.2L668.3 529.4L670.6 568.2L672.8 568.2L675.1 568.2L677.4 568.2L679.6 568.2L681.9 568.2L684.2 568.2L686.4 568.2L688.7 568.2L691.0 568.2L693.2 529.4L695.5 568.2L697.8 568.2L700.0 568.2L702.3 568.2L704.5 568.2L706.8 568.2L709.1 568.2L711.3 568.2L713.6 568.2L715.9 568.2L718.1 568.2L720.4 568.2L722.7 566.3L724.9 568.2L727.2 568.2L729.5 568.2L731.7 558.5L734.0 568.2L736.3 568.2L738.5 568.2L740.8 529.4L743.1 568.2L745.3 568.2L747.6 568.2L749.9 568.2L752.1 568.2L754.4 529.4L756.6 568.2L758.9 568.2L761.2 568.2L763.4 568.2L765.7 568.2L768.0 529.4L770.2 568.2L772.5 568.2L774.8 568.2L777.0 568.2L779.3 568.2L781.6 568.2L783.8 529.4L786.1 568.2L788.4 568.2L790.6 568.2L792.9 568.2L795.2 537.2L797.4 568.2L799.7 568.2L801.9 568.2L804.2 568.2L806.5 568.2L808.7 568.2L811.0 568.2L813.3 568.2L815.5 529.4L817.8 568.2L820.1 568.2L822.3 568.2L824.6 568.2L826.9 568.2L829.1 568.2L831.4 568.2L833.7 568.2L835.9 568.2L838.2 568.2L840.5 568.2L842.7 568.2L845.0 568.2L847.2 529.4L849.5 568.2L851.8 568.2L854.0 568.2L856.3 568.2L858.6 568.2L860.8 568.2L863.1 568.2L865.4 568.2L867.6 568.2L869.9 568.2L872.2 568.2L874.4 568.2L876.7 568.2L879.0 568.2L881.2 568.2L883.5 568.2L885.8 568.2L888.0 568.2L890.3 568.2L892.5 568.2L894.8 568.2L897.1 568.2L899.3 537.2L901.6 568.2L903.9 568.2L906.1 568.2L908.4 529.4L910.7 568.2L912.9 568.2L915.2 568.2L917.5 568.2L919.7 568.2L922.0 568.2L924.3 568.2L926.5 529.4L928.8 529.4L931.1 568.2L933.3 568.2L935.6 568.2L937.8 568.2L940.1 529.4L942.4 568.2L944.6 568.2L946.9 568.2L949.2 568.2L951.4 568.2L953.7 568.2L956.0 568.2L958.2 568.2L960.5 568.2L962.8 568.2L965.0 568.2L967.3 568.2L969.6 568.2L971.8 568.2L974.1 568.2L976.4 529.4L978.6 568.2L980.9 568.2L983.1 529.4L985.4 568.2L987.7 568.2L989.9 568.2L992.2 568.2L994.5 568.2L996.7 568.2L999.0 568.2" fill="none" stroke="#e6a41c" stroke-width="1.4"/><g fill="#eaa823"><circle cx="319.5" cy="568.2" r="1.3"/><circle cx="321.8" cy="568.2" r="1.3"/><circle cx="324.0" cy="568.2" r="1.3"/><circle cx="326.3" cy="568.2" r="1.3"/><circle cx="328.6" cy="568.2" r="1.3"/><circle cx="330.8" cy="558.5" r="1.3"/><circle cx="333.1" cy="568.2" r="1.3"/><circle cx="335.4" cy="568.2" r="1.3"/><circle cx="337.6" cy="568.2" r="1.3"/><circle cx="339.9" cy="568.2" r="1.3"/><circle cx="342.1" cy="568.2" r="1.3"/><circle cx="344.4" cy="568.2" r="1.3"/><circle cx="346.7" cy="568.2" r="1.3"/><circle cx="348.9" cy="568.2" r="1.3"/><circle cx="351.2" cy="568.2" r="1.3"/><circle cx="353.5" cy="568.2" r="1.3"/><circle cx="355.7" cy="568.2" r="1.3"/><circle cx="358.0" cy="568.2" r="1.3"/><circle cx="360.3" cy="529.4" r="1.3"/><circle cx="362.5" cy="568.2" r="1.3"/><circle cx="364.8" cy="568.2" r="1.3"/><circle cx="367.1" cy="568.2" r="1.3"/><circle cx="369.3" cy="568.2" r="1.3"/><circle cx="371.6" cy="568.2" r="1.3"/><circle cx="373.9" cy="568.2" r="1.3"/><circle cx="376.1" cy="568.2" r="1.3"/><circle cx="378.4" cy="568.2" r="1.3"/><circle cx="380.7" cy="568.2" r="1.3"/><circle cx="382.9" cy="568.2" r="1.3"/><circle cx="385.2" cy="568.2" r="1.3"/><circle cx="387.4" cy="568.2" r="1.3"/><circle cx="389.7" cy="568.2" r="1.3"/><circle cx="392.0" cy="568.2" r="1.3"/><circle cx="394.2" cy="568.2" r="1.3"/><circle cx="396.5" cy="568.2" r="1.3"/><circle cx="398.8" cy="568.2" r="1.3"/><circle cx="401.0" cy="568.2" r="1.3"/><circle cx="403.3" cy="529.4" r="1.3"/><circle cx="405.6" cy="568.2" r="1.3"/><circle cx="407.8" cy="568.2" r="1.3"/><circle cx="410.1" cy="568.2" r="1.3"/><circle cx="412.4" cy="529.4" r="1.3"/><circle cx="414.6" cy="568.2" r="1.3"/><circle cx="416.9" cy="529.4" r="1.3"/><circle cx="419.2" cy="535.2" r="1.3"/><circle cx="421.4" cy="568.2" r="1.3"/><circle cx="423.7" cy="568.2" r="1.3"/><circle cx="426.0" cy="568.2" r="1.3"/><circle cx="428.2" cy="568.2" r="1.3"/><circle cx="430.5" cy="568.2" r="1.3"/><circle cx="432.8" cy="568.2" r="1.3"/><circle cx="435.0" cy="568.2" r="1.3"/><circle cx="437.3" cy="568.2" r="1.3"/><circle cx="439.5" cy="568.2" r="1.3"/><circle cx="441.8" cy="568.2" r="1.3"/><circle cx="444.1" cy="529.4" r="1.3"/><circle cx="446.3" cy="535.2" r="1.3"/><circle cx="448.6" cy="568.2" r="1.3"/><circle cx="450.9" cy="568.2" r="1.3"/><circle cx="453.1" cy="529.4" r="1.3"/><circle cx="455.4" cy="568.2" r="1.3"/><circle cx="457.7" cy="568.2" r="1.3"/><circle cx="459.9" cy="568.2" r="1.3"/><circle cx="462.2" cy="529.4" r="1.3"/><circle cx="464.5" cy="568.2" r="1.3"/><circle cx="466.7" cy="568.2" r="1.3"/><circle cx="469.0" cy="568.2" r="1.3"/><circle cx="471.3" cy="568.2" r="1.3"/><circle cx="473.5" cy="535.2" r="1.3"/><circle cx="475.8" cy="568.2" r="1.3"/><circle cx="478.1" cy="568.2" r="1.3"/><circle cx="480.3" cy="568.2" r="1.3"/><circle cx="482.6" cy="568.2" r="1.3"/><circle cx="484.8" cy="568.2" r="1.3"/><circle cx="487.1" cy="568.2" r="1.3"/><circle cx="489.4" cy="568.2" r="1.3"/><circle cx="491.6" cy="529.4" r="1.3"/><circle cx="493.9" cy="568.2" r="1.3"/><circle cx="496.2" cy="568.2" r="1.3"/><circle cx="498.4" cy="568.2" r="1.3"/><circle cx="500.7" cy="568.2" r="1.3"/><circle cx="503.0" cy="568.2" r="1.3"/><circle cx="505.2" cy="568.2" r="1.3"/><circle cx="507.5" cy="568.2" r="1.3"/><circle cx="509.8" cy="568.2" r="1.3"/><circle cx="512.0" cy="568.2" r="1.3"/><circle cx="514.3" cy="568.2" r="1.3"/><circle cx="516.6" cy="568.2" r="1.3"/><circle cx="518.8" cy="537.2" r="1.3"/><circle cx="521.1" cy="568.2" r="1.3"/><circle cx="523.4" cy="531.3" r="1.3"/><circle cx="525.6" cy="568.2" r="1.3"/><circle cx="527.9" cy="568.2" r="1.3"/><circle cx="530.1" cy="568.2" r="1.3"/><circle cx="532.4" cy="531.3" r="1.3"/><circle cx="534.7" cy="568.2" r="1.3"/><circle cx="536.9" cy="568.2" r="1.3"/><circle cx="539.2" cy="568.2" r="1.3"/><circle cx="541.5" cy="537.2" r="1.3"/><circle cx="543.7" cy="568.2" r="1.3"/><circle cx="546.0" cy="568.2" r="1.3"/><circle cx="548.3" cy="568.2" r="1.3"/><circle cx="550.5" cy="568.2" r="1.3"/><circle cx="552.8" cy="568.2" r="1.3"/><circle cx="555.1" cy="568.2" r="1.3"/><circle cx="557.3" cy="568.2" r="1.3"/><circle cx="559.6" cy="568.2" r="1.3"/><circle cx="561.9" cy="568.2" r="1.3"/><circle cx="564.1" cy="568.2" r="1.3"/><circle cx="566.4" cy="568.2" r="1.3"/><circle cx="568.6" cy="531.3" r="1.3"/><circle cx="570.9" cy="568.2" r="1.3"/><circle cx="573.2" cy="568.2" r="1.3"/><circle cx="575.4" cy="568.2" r="1.3"/><circle cx="577.7" cy="568.2" r="1.3"/><circle cx="580.0" cy="568.2" r="1.3"/><circle cx="582.2" cy="568.2" r="1.3"/><circle cx="584.5" cy="568.2" r="1.3"/><circle cx="586.8" cy="568.2" r="1.3"/><circle cx="589.0" cy="568.2" r="1.3"/><circle cx="591.3" cy="568.2" r="1.3"/><circle cx="593.6" cy="568.2" r="1.3"/><circle cx="595.8" cy="568.2" r="1.3"/><circle cx="598.1" cy="568.2" r="1.3"/><circle cx="600.4" cy="568.2" r="1.3"/><circle cx="602.6" cy="529.4" r="1.3"/><circle cx="604.9" cy="568.2" r="1.3"/><circle cx="607.2" cy="568.2" r="1.3"/><circle cx="609.4" cy="568.2" r="1.3"/><circle cx="611.7" cy="568.2" r="1.3"/><circle cx="614.0" cy="568.2" r="1.3"/><circle cx="616.2" cy="568.2" r="1.3"/><circle cx="618.5" cy="568.2" r="1.3"/><circle cx="620.7" cy="568.2" r="1.3"/><circle cx="623.0" cy="568.2" r="1.3"/><circle cx="625.3" cy="568.2" r="1.3"/><circle cx="627.5" cy="568.2" r="1.3"/><circle cx="629.8" cy="568.2" r="1.3"/><circle cx="632.1" cy="537.2" r="1.3"/><circle cx="634.3" cy="568.2" r="1.3"/><circle cx="636.6" cy="568.2" r="1.3"/><circle cx="638.9" cy="568.2" r="1.3"/><circle cx="641.1" cy="568.2" r="1.3"/><circle cx="643.4" cy="568.2" r="1.3"/><circle cx="645.7" cy="568.2" r="1.3"/><circle cx="647.9" cy="568.2" r="1.3"/><circle cx="650.2" cy="568.2" r="1.3"/><circle cx="652.5" cy="568.2" r="1.3"/><circle cx="654.7" cy="568.2" r="1.3"/><circle cx="657.0" cy="568.2" r="1.3"/><circle cx="659.2" cy="568.2" r="1.3"/><circle cx="661.5" cy="568.2" r="1.3"/><circle cx="663.8" cy="529.4" r="1.3"/><circle cx="666.0" cy="568.2" r="1.3"/><circle cx="668.3" cy="529.4" r="1.3"/><circle cx="670.6" cy="568.2" r="1.3"/><circle cx="672.8" cy="568.2" r="1.3"/><circle cx="675.1" cy="568.2" r="1.3"/><circle cx="677.4" cy="568.2" r="1.3"/><circle cx="679.6" cy="568.2" r="1.3"/><circle cx="681.9" cy="568.2" r="1.3"/><circle cx="684.2" cy="568.2" r="1.3"/><circle cx="686.4" cy="568.2" r="1.3"/><circle cx="688.7" cy="568.2" r="1.3"/><circle cx="691.0" cy="568.2" r="1.3"/><circle cx="693.2" cy="529.4" r="1.3"/><circle cx="695.5" cy="568.2" r="1.3"/><circle cx="697.8" cy="568.2" r="1.3"/><circle cx="700.0" cy="568.2" r="1.3"/><circle cx="702.3" cy="568.2" r="1.3"/><circle cx="704.5" cy="568.2" r="1.3"/><circle cx="706.8" cy="568.2" r="1.3"/><circle cx="709.1" cy="568.2" r="1.3"/><circle cx="711.3" cy="568.2" r="1.3"/><circle cx="713.6" cy="568.2" r="1.3"/><circle cx="715.9" cy="568.2" r="1.3"/><circle cx="718.1" cy="568.2" r="1.3"/><circle cx="720.4" cy="568.2" r="1.3"/><circle cx="722.7" cy="566.3" r="1.3"/><circle cx="724.9" cy="568.2" r="1.3"/><circle cx="727.2" cy="568.2" r="1.3"/><circle cx="729.5" cy="568.2" r="1.3"/><circle cx="731.7" cy="558.5" r="1.3"/><circle cx="734.0" cy="568.2" r="1.3"/><circle cx="736.3" cy="568.2" r="1.3"/><circle cx="738.5" cy="568.2" r="1.3"/><circle cx="740.8" cy="529.4" r="1.3"/><circle cx="743.1" cy="568.2" r="1.3"/><circle cx="745.3" cy="568.2" r="1.3"/><circle cx="747.6" cy="568.2" r="1.3"/><circle cx="749.9" cy="568.2" r="1.3"/><circle cx="752.1" cy="568.2" r="1.3"/><circle cx="754.4" cy="529.4" r="1.3"/><circle cx="756.6" cy="568.2" r="1.3"/><circle cx="758.9" cy="568.2" r="1.3"/><circle cx="761.2" cy="568.2" r="1.3"/><circle cx="763.4" cy="568.2" r="1.3"/><circle cx="765.7" cy="568.2" r="1.3"/><circle cx="768.0" cy="529.4" r="1.3"/><circle cx="770.2" cy="568.2" r="1.3"/><circle cx="772.5" cy="568.2" r="1.3"/><circle cx="774.8" cy="568.2" r="1.3"/><circle cx="777.0" cy="568.2" r="1.3"/><circle cx="779.3" cy="568.2" r="1.3"/><circle cx="781.6" cy="568.2" r="1.3"/><circle cx="783.8" cy="529.4" r="1.3"/><circle cx="786.1" cy="568.2" r="1.3"/><circle cx="788.4" cy="568.2" r="1.3"/><circle cx="790.6" cy="568.2" r="1.3"/><circle cx="792.9" cy="568.2" r="1.3"/><circle cx="795.2" cy="537.2" r="1.3"/><circle cx="797.4" cy="568.2" r="1.3"/><circle cx="799.7" cy="568.2" r="1.3"/><circle cx="801.9" cy="568.2" r="1.3"/><circle cx="804.2" cy="568.2" r="1.3"/><circle cx="806.5" cy="568.2" r="1.3"/><circle cx="808.7" cy="568.2" r="1.3"/><circle cx="811.0" cy="568.2" r="1.3"/><circle cx="813.3" cy="568.2" r="1.3"/><circle cx="815.5" cy="529.4" r="1.3"/><circle cx="817.8" cy="568.2" r="1.3"/><circle cx="820.1" cy="568.2" r="1.3"/><circle cx="822.3" cy="568.2" r="1.3"/><circle cx="824.6" cy="568.2" r="1.3"/><circle cx="826.9" cy="568.2" r="1.3"/><circle cx="829.1" cy="568.2" r="1.3"/><circle cx="831.4" cy="568.2" r="1.3"/><circle cx="833.7" cy="568.2" r="1.3"/><circle cx="835.9" cy="568.2" r="1.3"/><circle cx="838.2" cy="568.2" r="1.3"/><circle cx="840.5" cy="568.2" r="1.3"/><circle cx="842.7" cy="568.2" r="1.3"/><circle cx="845.0" cy="568.2" r="1.3"/><circle cx="847.2" cy="529.4" r="1.3"/><circle cx="849.5" cy="568.2" r="1.3"/><circle cx="851.8" cy="568.2" r="1.3"/><circle cx="854.0" cy="568.2" r="1.3"/><circle cx="856.3" cy="568.2" r="1.3"/><circle cx="858.6" cy="568.2" r="1.3"/><circle cx="860.8" cy="568.2" r="1.3"/><circle cx="863.1" cy="568.2" r="1.3"/><circle cx="865.4" cy="568.2" r="1.3"/><circle cx="867.6" cy="568.2" r="1.3"/><circle cx="869.9" cy="568.2" r="1.3"/><circle cx="872.2" cy="568.2" r="1.3"/><circle cx="874.4" cy="568.2" r="1.3"/><circle cx="876.7" cy="568.2" r="1.3"/><circle cx="879.0" cy="568.2" r="1.3"/><circle cx="881.2" cy="568.2" r="1.3"/><circle cx="883.5" cy="568.2" r="1.3"/><circle cx="885.8" cy="568.2" r="1.3"/><circle cx="888.0" cy="568.2" r="1.3"/><circle cx="890.3" cy="568.2" r="1.3"/><circle cx="892.5" cy="568.2" r="1.3"/><circle cx="894.8" cy="568.2" r="1.3"/><circle cx="897.1" cy="568.2" r="1.3"/><circle cx="899.3" cy="537.2" r="1.3"/><circle cx="901.6" cy="568.2" r="1.3"/><circle cx="903.9" cy="568.2" r="1.3"/><circle cx="906.1" cy="568.2" r="1.3"/><circle cx="908.4" cy="529.4" r="1.3"/><circle cx="910.7" cy="568.2" r="1.3"/><circle cx="912.9" cy="568.2" r="1.3"/><circle cx="915.2" cy="568.2" r="1.3"/><circle cx="917.5" cy="568.2" r="1.3"/><circle cx="919.7" cy="568.2" r="1.3"/><circle cx="922.0" cy="568.2" r="1.3"/><circle cx="924.3" cy="568.2" r="1.3"/><circle cx="926.5" cy="529.4" r="1.3"/><circle cx="928.8" cy="529.4" r="1.3"/><circle cx="931.1" cy="568.2" r="1.3"/><circle cx="933.3" cy="568.2" r="1.3"/><circle cx="935.6" cy="568.2" r="1.3"/><circle cx="937.8" cy="568.2" r="1.3"/><circle cx="940.1" cy="529.4" r="1.3"/><circle cx="942.4" cy="568.2" r="1.3"/><circle cx="944.6" cy="568.2" r="1.3"/><circle cx="946.9" cy="568.2" r="1.3"/><circle cx="949.2" cy="568.2" r="1.3"/><circle cx="951.4" cy="568.2" r="1.3"/><circle cx="953.7" cy="568.2" r="1.3"/><circle cx="956.0" cy="568.2" r="1.3"/><circle cx="958.2" cy="568.2" r="1.3"/><circle cx="960.5" cy="568.2" r="1.3"/><circle cx="962.8" cy="568.2" r="1.3"/><circle cx="965.0" cy="568.2" r="1.3"/><circle cx="967.3" cy="568.2" r="1.3"/><circle cx="969.6" cy="568.2" r="1.3"/><circle cx="971.8" cy="568.2" r="1.3"/><circle cx="974.1" cy="568.2" r="1.3"/><circle cx="976.4" cy="529.4" r="1.3"/><circle cx="978.6" cy="568.2" r="1.3"/><circle cx="980.9" cy="568.2" r="1.3"/><circle cx="983.1" cy="529.4" r="1.3"/><circle cx="985.4" cy="568.2" r="1.3"/><circle cx="987.7" cy="568.2" r="1.3"/><circle cx="989.9" cy="568.2" r="1.3"/><circle cx="992.2" cy="568.2" r="1.3"/><circle cx="994.5" cy="568.2" r="1.3"/><circle cx="996.7" cy="568.2" r="1.3"/><circle cx="999.0" cy="568.2" r="1.3"/></g></svg><div class="tl" style="left:69.0px;width:240px;text-align:right;top:501.3px">0.3</div><div class="tl" style="left:69.0px;width:240px;text-align:right;top:520.7px">0.2</div><div class="tl" style="left:69.0px;width:240px;text-align:right;top:540.1px">0.1</div><div class="tl" style="left:69.0px;width:240px;text-align:right;top:559.5px">0</div><div class="tl" style="left:279.5px;width:80px;text-align:center;top:578.2px">-5:00</div><div class="tl" style="left:347.4px;width:80px;text-align:center;top:578.2px">-4:30</div><div class="tl" style="left:415.4px;width:80px;text-align:center;top:578.2px">-4:00</div><div class="tl" style="left:483.4px;width:80px;text-align:center;top:578.2px">-3:30</div><div class="tl" style="left:551.3px;width:80px;text-align:center;top:578.2px">-3:00</div><div class="tl" style="left:619.2px;width:80px;text-align:center;top:578.2px">-2:30</div><div class="tl" style="left:687.2px;width:80px;text-align:center;top:578.2px">-2:00</div><div class="tl" style="left:755.1px;width:80px;text-align:center;top:578.2px">-1:30</div><div class="tl" style="left:823.1px;width:80px;text-align:center;top:578.2px">-1:00</div><div class="tl" style="left:891.0px;width:80px;text-align:center;top:578.2px">-0:30</div><div class="tl" style="left:959.0px;width:80px;text-align:center;top:578.2px">0:00</div><div class="yt" style="left:255px;top:576.5px;font-size:14.5px">Скорость</div><div class="yt" style="left:272.5px;top:576.5px;font-size:14.5px">линии</div><div class="panel" style="top:607px;height:130px"></div><div class="ttl" style="left:275px;width:757px;text-align:center;top:616px">Page Faults: 3803.21 (avg)</div><svg class="abs" style="left:0;top:0" width="1057" height="760" viewBox="0 0 1057 760"><line x1="312.4" y1="644.0" x2="999" y2="644.0" stroke="#4d5056" stroke-width="1"/><line x1="312.4" y1="658.5" x2="999" y2="658.5" stroke="#4d5056" stroke-width="1"/><line x1="312.4" y1="673.1" x2="999" y2="673.1" stroke="#4d5056" stroke-width="1"/><line x1="312.4" y1="687.7" x2="999" y2="687.7" stroke="#4d5056" stroke-width="1"/><line x1="312.4" y1="702.2" x2="999" y2="702.2" stroke="#4d5056" stroke-width="1"/><line x1="322.4" y1="644" x2="322.4" y2="711.2" stroke="#383b41" stroke-width="1"/><line x1="390.1" y1="644" x2="390.1" y2="711.2" stroke="#383b41" stroke-width="1"/><line x1="457.7" y1="644" x2="457.7" y2="711.2" stroke="#383b41" stroke-width="1"/><line x1="525.4" y1="644" x2="525.4" y2="711.2" stroke="#383b41" stroke-width="1"/><line x1="593.0" y1="644" x2="593.0" y2="711.2" stroke="#383b41" stroke-width="1"/><line x1="660.7" y1="644" x2="660.7" y2="711.2" stroke="#383b41" stroke-width="1"/><line x1="728.4" y1="644" x2="728.4" y2="711.2" stroke="#383b41" stroke-width="1"/><line x1="796.0" y1="644" x2="796.0" y2="711.2" stroke="#383b41" stroke-width="1"/><line x1="863.7" y1="644" x2="863.7" y2="711.2" stroke="#383b41" stroke-width="1"/><line x1="931.3" y1="644" x2="931.3" y2="711.2" stroke="#383b41" stroke-width="1"/><line x1="999.0" y1="644" x2="999.0" y2="711.2" stroke="#383b41" stroke-width="1"/><line x1="322.4" y1="644" x2="322.4" y2="711.2" stroke="#45484e" stroke-width="1"/><path d="M322.4 701.5L324.7 700.8L326.9 700.5L329.2 701.3L331.4 701.4L333.7 700.5L335.9 700.7L338.2 691.3L340.4 693.5L342.7 702.2L345.0 695.9L347.2 654.9L349.5 694.9L351.7 700.7L354.0 701.2L356.2 701.5L358.5 700.7L360.7 700.5L363.0 700.1L365.3 701.3L367.5 700.7L369.8 687.7L372.0 700.0L374.3 700.5L376.5 700.3L378.8 700.0L381.0 699.4L383.3 700.6L385.5 700.0L387.8 699.6L390.1 699.3L392.3 700.5L394.6 700.0L396.8 699.4L399.1 699.3L401.3 700.0L403.6 700.7L405.8 699.4L408.1 700.2L410.4 699.4L412.6 699.8L414.9 699.5L417.1 700.5L419.4 700.0L421.6 699.7L423.9 698.4L426.1 696.7L428.4 696.4L430.7 699.3L432.9 700.0L435.2 700.2L437.4 700.0L439.7 700.0L441.9 662.2L444.2 696.7L446.4 681.8L448.7 698.6L451.0 699.6L453.2 699.1L455.5 699.1L457.7 700.4L460.0 700.0L462.2 698.9L464.5 696.4L466.7 696.3L469.0 696.2L471.3 691.3L473.5 700.0L475.8 699.0L478.0 698.0L480.3 696.4L482.5 698.4L484.8 700.0L487.0 699.9L489.3 698.5L491.5 698.1L493.8 697.8L496.1 696.5L498.3 696.4L500.6 699.3L502.8 700.7L505.1 700.8L507.3 701.3L509.6 701.3L511.8 700.8L514.1 700.7L516.4 691.3L518.6 700.0L520.9 700.2L523.1 698.8L525.4 699.1L527.6 697.8L529.9 698.8L532.1 700.7L534.4 701.4L536.7 700.7L538.9 691.3L541.2 700.7L543.4 701.2L545.7 700.0L547.9 699.6L550.2 699.9L552.4 699.6L554.7 700.4L557.0 699.1L559.2 699.6L561.5 698.8L563.7 698.7L566.0 699.7L568.2 698.6L570.5 698.3L572.7 699.4L575.0 698.6L577.3 699.1L579.5 700.7L581.8 700.2L584.0 701.1L586.3 700.3L588.5 701.3L590.8 700.7L593.0 700.1L595.3 701.2L597.6 701.1L599.8 700.7L602.1 701.0L604.3 700.7L606.6 689.8L608.8 696.9L611.1 699.3L613.3 696.1L615.6 693.5L617.8 700.0L620.1 699.3L622.4 700.0L624.6 699.2L626.9 698.7L629.1 698.6L631.4 698.0L633.6 698.5L635.9 698.4L638.1 698.0L640.4 698.6L642.7 699.8L644.9 702.2L647.2 652.7L649.4 652.7L651.7 653.5L653.9 676.7L656.2 669.5L658.4 674.6L660.7 689.1L663.0 694.9L665.2 698.6L667.5 700.0L669.7 700.7L672.0 699.6L674.2 700.4L676.5 699.8L678.7 699.3L681.0 699.9L683.3 699.8L685.5 700.3L687.8 700.7L690.0 700.7L692.3 700.5L694.5 699.8L696.8 700.1L699.0 700.0L701.3 699.4L703.6 700.6L705.8 700.4L708.1 699.8L710.3 700.7L712.6 700.7L714.8 700.2L717.1 700.6L719.3 700.2L721.6 700.4L723.8 699.9L726.1 700.0L728.4 693.5L730.6 700.0L732.9 698.8L735.1 697.8L737.4 695.7L739.6 694.9L741.9 700.0L744.1 700.4L746.4 699.5L748.7 699.0L750.9 699.0L753.2 699.4L755.4 699.4L757.7 699.6L759.9 698.6L762.2 698.5L764.4 698.7L766.7 698.1L769.0 698.3L771.2 697.4L773.5 697.8L775.7 699.1L778.0 700.0L780.2 700.7L782.5 700.0L784.7 700.2L787.0 700.4L789.3 700.7L791.5 699.6L793.8 700.7L796.0 699.9L798.3 699.4L800.5 700.0L802.8 687.7L805.0 700.0L807.3 698.9L809.6 697.6L811.8 696.3L814.1 696.9L816.3 696.7L818.6 693.5L820.8 698.4L823.1 700.0L825.3 699.6L827.6 699.7L829.8 700.7L832.1 699.5L834.4 699.7L836.6 700.1L838.9 699.7L841.1 700.1L843.4 700.4L845.6 700.6L847.9 700.4L850.1 700.7L852.4 700.3L854.7 699.7L856.9 699.7L859.2 700.0L861.4 699.6L863.7 700.1L865.9 699.5L868.2 699.5L870.4 698.9L872.7 699.1L875.0 699.3L877.2 698.6L879.5 698.0L881.7 698.6L884.0 696.6L886.2 697.1L888.5 694.9L890.7 696.8L893.0 696.1L895.3 696.7L897.5 697.8L899.8 700.0L902.0 699.5L904.3 700.3L906.5 700.4L908.8 699.4L911.0 699.8L913.3 699.7L915.6 699.8L917.8 699.3L920.1 700.1L922.3 699.5L924.6 699.7L926.8 699.5L929.1 700.1L931.3 699.7L933.6 699.9L935.9 700.3L938.1 700.4L940.4 699.8L942.6 700.6L944.9 699.4L947.1 700.5L949.4 700.7L951.6 700.6L953.9 699.4L956.1 700.2L958.4 700.5L960.7 700.0L962.9 698.7L965.2 696.2L967.4 694.9L969.7 696.1L971.9 696.4L974.2 697.4L976.4 697.1L978.7 697.8L981.0 697.8L983.2 696.7L985.5 696.1L987.7 696.4L990.0 697.1L992.2 698.6L994.5 697.9L996.7 698.6L999.0 699.0" fill="none" stroke="#0f860f" stroke-width="1.5"/><g fill="#0f8c0f"><circle cx="322.4" cy="701.5" r="2.2"/><circle cx="324.7" cy="700.8" r="2.2"/><circle cx="326.9" cy="700.5" r="2.2"/><circle cx="329.2" cy="701.3" r="2.2"/><circle cx="331.4" cy="701.4" r="2.2"/><circle cx="333.7" cy="700.5" r="2.2"/><circle cx="335.9" cy="700.7" r="2.2"/><circle cx="338.2" cy="691.3" r="2.2"/><circle cx="340.4" cy="693.5" r="2.2"/><circle cx="342.7" cy="702.2" r="2.2"/><circle cx="345.0" cy="695.9" r="2.2"/><circle cx="347.2" cy="654.9" r="2.2"/><circle cx="349.5" cy="694.9" r="2.2"/><circle cx="351.7" cy="700.7" r="2.2"/><circle cx="354.0" cy="701.2" r="2.2"/><circle cx="356.2" cy="701.5" r="2.2"/><circle cx="358.5" cy="700.7" r="2.2"/><circle cx="360.7" cy="700.5" r="2.2"/><circle cx="363.0" cy="700.1" r="2.2"/><circle cx="365.3" cy="701.3" r="2.2"/><circle cx="367.5" cy="700.7" r="2.2"/><circle cx="369.8" cy="687.7" r="2.2"/><circle cx="372.0" cy="700.0" r="2.2"/><circle cx="374.3" cy="700.5" r="2.2"/><circle cx="376.5" cy="700.3" r="2.2"/><circle cx="378.8" cy="700.0" r="2.2"/><circle cx="381.0" cy="699.4" r="2.2"/><circle cx="383.3" cy="700.6" r="2.2"/><circle cx="385.5" cy="700.0" r="2.2"/><circle cx="387.8" cy="699.6" r="2.2"/><circle cx="390.1" cy="699.3" r="2.2"/><circle cx="392.3" cy="700.5" r="2.2"/><circle cx="394.6" cy="700.0" r="2.2"/><circle cx="396.8" cy="699.4" r="2.2"/><circle cx="399.1" cy="699.3" r="2.2"/><circle cx="401.3" cy="700.0" r="2.2"/><circle cx="403.6" cy="700.7" r="2.2"/><circle cx="405.8" cy="699.4" r="2.2"/><circle cx="408.1" cy="700.2" r="2.2"/><circle cx="410.4" cy="699.4" r="2.2"/><circle cx="412.6" cy="699.8" r="2.2"/><circle cx="414.9" cy="699.5" r="2.2"/><circle cx="417.1" cy="700.5" r="2.2"/><circle cx="419.4" cy="700.0" r="2.2"/><circle cx="421.6" cy="699.7" r="2.2"/><circle cx="423.9" cy="698.4" r="2.2"/><circle cx="426.1" cy="696.7" r="2.2"/><circle cx="428.4" cy="696.4" r="2.2"/><circle cx="430.7" cy="699.3" r="2.2"/><circle cx="432.9" cy="700.0" r="2.2"/><circle cx="435.2" cy="700.2" r="2.2"/><circle cx="437.4" cy="700.0" r="2.2"/><circle cx="439.7" cy="700.0" r="2.2"/><circle cx="441.9" cy="662.2" r="2.2"/><circle cx="444.2" cy="696.7" r="2.2"/><circle cx="446.4" cy="681.8" r="2.2"/><circle cx="448.7" cy="698.6" r="2.2"/><circle cx="451.0" cy="699.6" r="2.2"/><circle cx="453.2" cy="699.1" r="2.2"/><circle cx="455.5" cy="699.1" r="2.2"/><circle cx="457.7" cy="700.4" r="2.2"/><circle cx="460.0" cy="700.0" r="2.2"/><circle cx="462.2" cy="698.9" r="2.2"/><circle cx="464.5" cy="696.4" r="2.2"/><circle cx="466.7" cy="696.3" r="2.2"/><circle cx="469.0" cy="696.2" r="2.2"/><circle cx="471.3" cy="691.3" r="2.2"/><circle cx="473.5" cy="700.0" r="2.2"/><circle cx="475.8" cy="699.0" r="2.2"/><circle cx="478.0" cy="698.0" r="2.2"/><circle cx="480.3" cy="696.4" r="2.2"/><circle cx="482.5" cy="698.4" r="2.2"/><circle cx="484.8" cy="700.0" r="2.2"/><circle cx="487.0" cy="699.9" r="2.2"/><circle cx="489.3" cy="698.5" r="2.2"/><circle cx="491.5" cy="698.1" r="2.2"/><circle cx="493.8" cy="697.8" r="2.2"/><circle cx="496.1" cy="696.5" r="2.2"/><circle cx="498.3" cy="696.4" r="2.2"/><circle cx="500.6" cy="699.3" r="2.2"/><circle cx="502.8" cy="700.7" r="2.2"/><circle cx="505.1" cy="700.8" r="2.2"/><circle cx="507.3" cy="701.3" r="2.2"/><circle cx="509.6" cy="701.3" r="2.2"/><circle cx="511.8" cy="700.8" r="2.2"/><circle cx="514.1" cy="700.7" r="2.2"/><circle cx="516.4" cy="691.3" r="2.2"/><circle cx="518.6" cy="700.0" r="2.2"/><circle cx="520.9" cy="700.2" r="2.2"/><circle cx="523.1" cy="698.8" r="2.2"/><circle cx="525.4" cy="699.1" r="2.2"/><circle cx="527.6" cy="697.8" r="2.2"/><circle cx="529.9" cy="698.8" r="2.2"/><circle cx="532.1" cy="700.7" r="2.2"/><circle cx="534.4" cy="701.4" r="2.2"/><circle cx="536.7" cy="700.7" r="2.2"/><circle cx="538.9" cy="691.3" r="2.2"/><circle cx="541.2" cy="700.7" r="2.2"/><circle cx="543.4" cy="701.2" r="2.2"/><circle cx="545.7" cy="700.0" r="2.2"/><circle cx="547.9" cy="699.6" r="2.2"/><circle cx="550.2" cy="699.9" r="2.2"/><circle cx="552.4" cy="699.6" r="2.2"/><circle cx="554.7" cy="700.4" r="2.2"/><circle cx="557.0" cy="699.1" r="2.2"/><circle cx="559.2" cy="699.6" r="2.2"/><circle cx="561.5" cy="698.8" r="2.2"/><circle cx="563.7" cy="698.7" r="2.2"/><circle cx="566.0" cy="699.7" r="2.2"/><circle cx="568.2" cy="698.6" r="2.2"/><circle cx="570.5" cy="698.3" r="2.2"/><circle cx="572.7" cy="699.4" r="2.2"/><circle cx="575.0" cy="698.6" r="2.2"/><circle cx="577.3" cy="699.1" r="2.2"/><circle cx="579.5" cy="700.7" r="2.2"/><circle cx="581.8" cy="700.2" r="2.2"/><circle cx="584.0" cy="701.1" r="2.2"/><circle cx="586.3" cy="700.3" r="2.2"/><circle cx="588.5" cy="701.3" r="2.2"/><circle cx="590.8" cy="700.7" r="2.2"/><circle cx="593.0" cy="700.1" r="2.2"/><circle cx="595.3" cy="701.2" r="2.2"/><circle cx="597.6" cy="701.1" r="2.2"/><circle cx="599.8" cy="700.7" r="2.2"/><circle cx="602.1" cy="701.0" r="2.2"/><circle cx="604.3" cy="700.7" r="2.2"/><circle cx="606.6" cy="689.8" r="2.2"/><circle cx="608.8" cy="696.9" r="2.2"/><circle cx="611.1" cy="699.3" r="2.2"/><circle cx="613.3" cy="696.1" r="2.2"/><circle cx="615.6" cy="693.5" r="2.2"/><circle cx="617.8" cy="700.0" r="2.2"/><circle cx="620.1" cy="699.3" r="2.2"/><circle cx="622.4" cy="700.0" r="2.2"/><circle cx="624.6" cy="699.2" r="2.2"/><circle cx="626.9" cy="698.7" r="2.2"/><circle cx="629.1" cy="698.6" r="2.2"/><circle cx="631.4" cy="698.0" r="2.2"/><circle cx="633.6" cy="698.5" r="2.2"/><circle cx="635.9" cy="698.4" r="2.2"/><circle cx="638.1" cy="698.0" r="2.2"/><circle cx="640.4" cy="698.6" r="2.2"/><circle cx="642.7" cy="699.8" r="2.2"/><circle cx="644.9" cy="702.2" r="2.2"/><circle cx="647.2" cy="652.7" r="2.2"/><circle cx="649.4" cy="652.7" r="2.2"/><circle cx="651.7" cy="653.5" r="2.2"/><circle cx="653.9" cy="676.7" r="2.2"/><circle cx="656.2" cy="669.5" r="2.2"/><circle cx="658.4" cy="674.6" r="2.2"/><circle cx="660.7" cy="689.1" r="2.2"/><circle cx="663.0" cy="694.9" r="2.2"/><circle cx="665.2" cy="698.6" r="2.2"/><circle cx="667.5" cy="700.0" r="2.2"/><circle cx="669.7" cy="700.7" r="2.2"/><circle cx="672.0" cy="699.6" r="2.2"/><circle cx="674.2" cy="700.4" r="2.2"/><circle cx="676.5" cy="699.8" r="2.2"/><circle cx="678.7" cy="699.3" r="2.2"/><circle cx="681.0" cy="699.9" r="2.2"/><circle cx="683.3" cy="699.8" r="2.2"/><circle cx="685.5" cy="700.3" r="2.2"/><circle cx="687.8" cy="700.7" r="2.2"/><circle cx="690.0" cy="700.7" r="2.2"/><circle cx="692.3" cy="700.5" r="2.2"/><circle cx="694.5" cy="699.8" r="2.2"/><circle cx="696.8" cy="700.1" r="2.2"/><circle cx="699.0" cy="700.0" r="2.2"/><circle cx="701.3" cy="699.4" r="2.2"/><circle cx="703.6" cy="700.6" r="2.2"/><circle cx="705.8" cy="700.4" r="2.2"/><circle cx="708.1" cy="699.8" r="2.2"/><circle cx="710.3" cy="700.7" r="2.2"/><circle cx="712.6" cy="700.7" r="2.2"/><circle cx="714.8" cy="700.2" r="2.2"/><circle cx="717.1" cy="700.6" r="2.2"/><circle cx="719.3" cy="700.2" r="2.2"/><circle cx="721.6" cy="700.4" r="2.2"/><circle cx="723.8" cy="699.9" r="2.2"/><circle cx="726.1" cy="700.0" r="2.2"/><circle cx="728.4" cy="693.5" r="2.2"/><circle cx="730.6" cy="700.0" r="2.2"/><circle cx="732.9" cy="698.8" r="2.2"/><circle cx="735.1" cy="697.8" r="2.2"/><circle cx="737.4" cy="695.7" r="2.2"/><circle cx="739.6" cy="694.9" r="2.2"/><circle cx="741.9" cy="700.0" r="2.2"/><circle cx="744.1" cy="700.4" r="2.2"/><circle cx="746.4" cy="699.5" r="2.2"/><circle cx="748.7" cy="699.0" r="2.2"/><circle cx="750.9" cy="699.0" r="2.2"/><circle cx="753.2" cy="699.4" r="2.2"/><circle cx="755.4" cy="699.4" r="2.2"/><circle cx="757.7" cy="699.6" r="2.2"/><circle cx="759.9" cy="698.6" r="2.2"/><circle cx="762.2" cy="698.5" r="2.2"/><circle cx="764.4" cy="698.7" r="2.2"/><circle cx="766.7" cy="698.1" r="2.2"/><circle cx="769.0" cy="698.3" r="2.2"/><circle cx="771.2" cy="697.4" r="2.2"/><circle cx="773.5" cy="697.8" r="2.2"/><circle cx="775.7" cy="699.1" r="2.2"/><circle cx="778.0" cy="700.0" r="2.2"/><circle cx="780.2" cy="700.7" r="2.2"/><circle cx="782.5" cy="700.0" r="2.2"/><circle cx="784.7" cy="700.2" r="2.2"/><circle cx="787.0" cy="700.4" r="2.2"/><circle cx="789.3" cy="700.7" r="2.2"/><circle cx="791.5" cy="699.6" r="2.2"/><circle cx="793.8" cy="700.7" r="2.2"/><circle cx="796.0" cy="699.9" r="2.2"/><circle cx="798.3" cy="699.4" r="2.2"/><circle cx="800.5" cy="700.0" r="2.2"/><circle cx="802.8" cy="687.7" r="2.2"/><circle cx="805.0" cy="700.0" r="2.2"/><circle cx="807.3" cy="698.9" r="2.2"/><circle cx="809.6" cy="697.6" r="2.2"/><circle cx="811.8" cy="696.3" r="2.2"/><circle cx="814.1" cy="696.9" r="2.2"/><circle cx="816.3" cy="696.7" r="2.2"/><circle cx="818.6" cy="693.5" r="2.2"/><circle cx="820.8" cy="698.4" r="2.2"/><circle cx="823.1" cy="700.0" r="2.2"/><circle cx="825.3" cy="699.6" r="2.2"/><circle cx="827.6" cy="699.7" r="2.2"/><circle cx="829.8" cy="700.7" r="2.2"/><circle cx="832.1" cy="699.5" r="2.2"/><circle cx="834.4" cy="699.7" r="2.2"/><circle cx="836.6" cy="700.1" r="2.2"/><circle cx="838.9" cy="699.7" r="2.2"/><circle cx="841.1" cy="700.1" r="2.2"/><circle cx="843.4" cy="700.4" r="2.2"/><circle cx="845.6" cy="700.6" r="2.2"/><circle cx="847.9" cy="700.4" r="2.2"/><circle cx="850.1" cy="700.7" r="2.2"/><circle cx="852.4" cy="700.3" r="2.2"/><circle cx="854.7" cy="699.7" r="2.2"/><circle cx="856.9" cy="699.7" r="2.2"/><circle cx="859.2" cy="700.0" r="2.2"/><circle cx="861.4" cy="699.6" r="2.2"/><circle cx="863.7" cy="700.1" r="2.2"/><circle cx="865.9" cy="699.5" r="2.2"/><circle cx="868.2" cy="699.5" r="2.2"/><circle cx="870.4" cy="698.9" r="2.2"/><circle cx="872.7" cy="699.1" r="2.2"/><circle cx="875.0" cy="699.3" r="2.2"/><circle cx="877.2" cy="698.6" r="2.2"/><circle cx="879.5" cy="698.0" r="2.2"/><circle cx="881.7" cy="698.6" r="2.2"/><circle cx="884.0" cy="696.6" r="2.2"/><circle cx="886.2" cy="697.1" r="2.2"/><circle cx="888.5" cy="694.9" r="2.2"/><circle cx="890.7" cy="696.8" r="2.2"/><circle cx="893.0" cy="696.1" r="2.2"/><circle cx="895.3" cy="696.7" r="2.2"/><circle cx="897.5" cy="697.8" r="2.2"/><circle cx="899.8" cy="700.0" r="2.2"/><circle cx="902.0" cy="699.5" r="2.2"/><circle cx="904.3" cy="700.3" r="2.2"/><circle cx="906.5" cy="700.4" r="2.2"/><circle cx="908.8" cy="699.4" r="2.2"/><circle cx="911.0" cy="699.8" r="2.2"/><circle cx="913.3" cy="699.7" r="2.2"/><circle cx="915.6" cy="699.8" r="2.2"/><circle cx="917.8" cy="699.3" r="2.2"/><circle cx="920.1" cy="700.1" r="2.2"/><circle cx="922.3" cy="699.5" r="2.2"/><circle cx="924.6" cy="699.7" r="2.2"/><circle cx="926.8" cy="699.5" r="2.2"/><circle cx="929.1" cy="700.1" r="2.2"/><circle cx="931.3" cy="699.7" r="2.2"/><circle cx="933.6" cy="699.9" r="2.2"/><circle cx="935.9" cy="700.3" r="2.2"/><circle cx="938.1" cy="700.4" r="2.2"/><circle cx="940.4" cy="699.8" r="2.2"/><circle cx="942.6" cy="700.6" r="2.2"/><circle cx="944.9" cy="699.4" r="2.2"/><circle cx="947.1" cy="700.5" r="2.2"/><circle cx="949.4" cy="700.7" r="2.2"/><circle cx="951.6" cy="700.6" r="2.2"/><circle cx="953.9" cy="699.4" r="2.2"/><circle cx="956.1" cy="700.2" r="2.2"/><circle cx="958.4" cy="700.5" r="2.2"/><circle cx="960.7" cy="700.0" r="2.2"/><circle cx="962.9" cy="698.7" r="2.2"/><circle cx="965.2" cy="696.2" r="2.2"/><circle cx="967.4" cy="694.9" r="2.2"/><circle cx="969.7" cy="696.1" r="2.2"/><circle cx="971.9" cy="696.4" r="2.2"/><circle cx="974.2" cy="697.4" r="2.2"/><circle cx="976.4" cy="697.1" r="2.2"/><circle cx="978.7" cy="697.8" r="2.2"/><circle cx="981.0" cy="697.8" r="2.2"/><circle cx="983.2" cy="696.7" r="2.2"/><circle cx="985.5" cy="696.1" r="2.2"/><circle cx="987.7" cy="696.4" r="2.2"/><circle cx="990.0" cy="697.1" r="2.2"/><circle cx="992.2" cy="698.6" r="2.2"/><circle cx="994.5" cy="697.9" r="2.2"/><circle cx="996.7" cy="698.6" r="2.2"/><circle cx="999.0" cy="699.0" r="2.2"/></g></svg><div class="tl" style="left:71.89999999999998px;width:240px;text-align:right;top:635.3px">80k</div><div class="tl" style="left:71.89999999999998px;width:240px;text-align:right;top:649.8px">60k</div><div class="tl" style="left:71.89999999999998px;width:240px;text-align:right;top:664.4px">40k</div><div class="tl" style="left:71.89999999999998px;width:240px;text-align:right;top:679.0px">20k</div><div class="tl" style="left:71.89999999999998px;width:240px;text-align:right;top:693.5px">0k</div><div class="tl" style="left:282.4px;width:80px;text-align:center;top:712.2px">-5:00</div><div class="tl" style="left:350.1px;width:80px;text-align:center;top:712.2px">-4:30</div><div class="tl" style="left:417.7px;width:80px;text-align:center;top:712.2px">-4:00</div><div class="tl" style="left:485.4px;width:80px;text-align:center;top:712.2px">-3:30</div><div class="tl" style="left:553.0px;width:80px;text-align:center;top:712.2px">-3:00</div><div class="tl" style="left:620.7px;width:80px;text-align:center;top:712.2px">-2:30</div><div class="tl" style="left:688.4px;width:80px;text-align:center;top:712.2px">-2:00</div><div class="tl" style="left:756.0px;width:80px;text-align:center;top:712.2px">-1:30</div><div class="tl" style="left:823.7px;width:80px;text-align:center;top:712.2px">-1:00</div><div class="tl" style="left:891.3px;width:80px;text-align:center;top:712.2px">-0:30</div><div class="tl" style="left:959.0px;width:80px;text-align:center;top:712.2px">-0:00</div><div class="yt" style="left:254.5px;top:712.5px;font-size:15.8px">Ошибки</div><div class="yt" style="left:272.5px;top:712.5px;font-size:15.1px">стр. памяти</div><div class="abs" id="sb"></div><div class="abs" id="lb"></div><div class="abs" id="rb"></div><div class="abs" id="bb"></div><div class="abs" style="left:1028.5px;top:731px;width:60px;height:60px;border-radius:17px;background:#0a84fe;box-shadow:0 0 0 1px #10243c"></div><svg class="abs" style="left:1030px;top:735px" width="27" height="25" viewBox="1030 735 27 25" fill="none" stroke="#0a0f2e" stroke-width="1.7"><path d="M1038.6 741.8L1043.6 746.6M1038.6 746.4V741.8H1043.2M1046.6 749.4L1051.4 754.3M1051.4 749.8V754.3H1046.9"/></svg></body></html>
